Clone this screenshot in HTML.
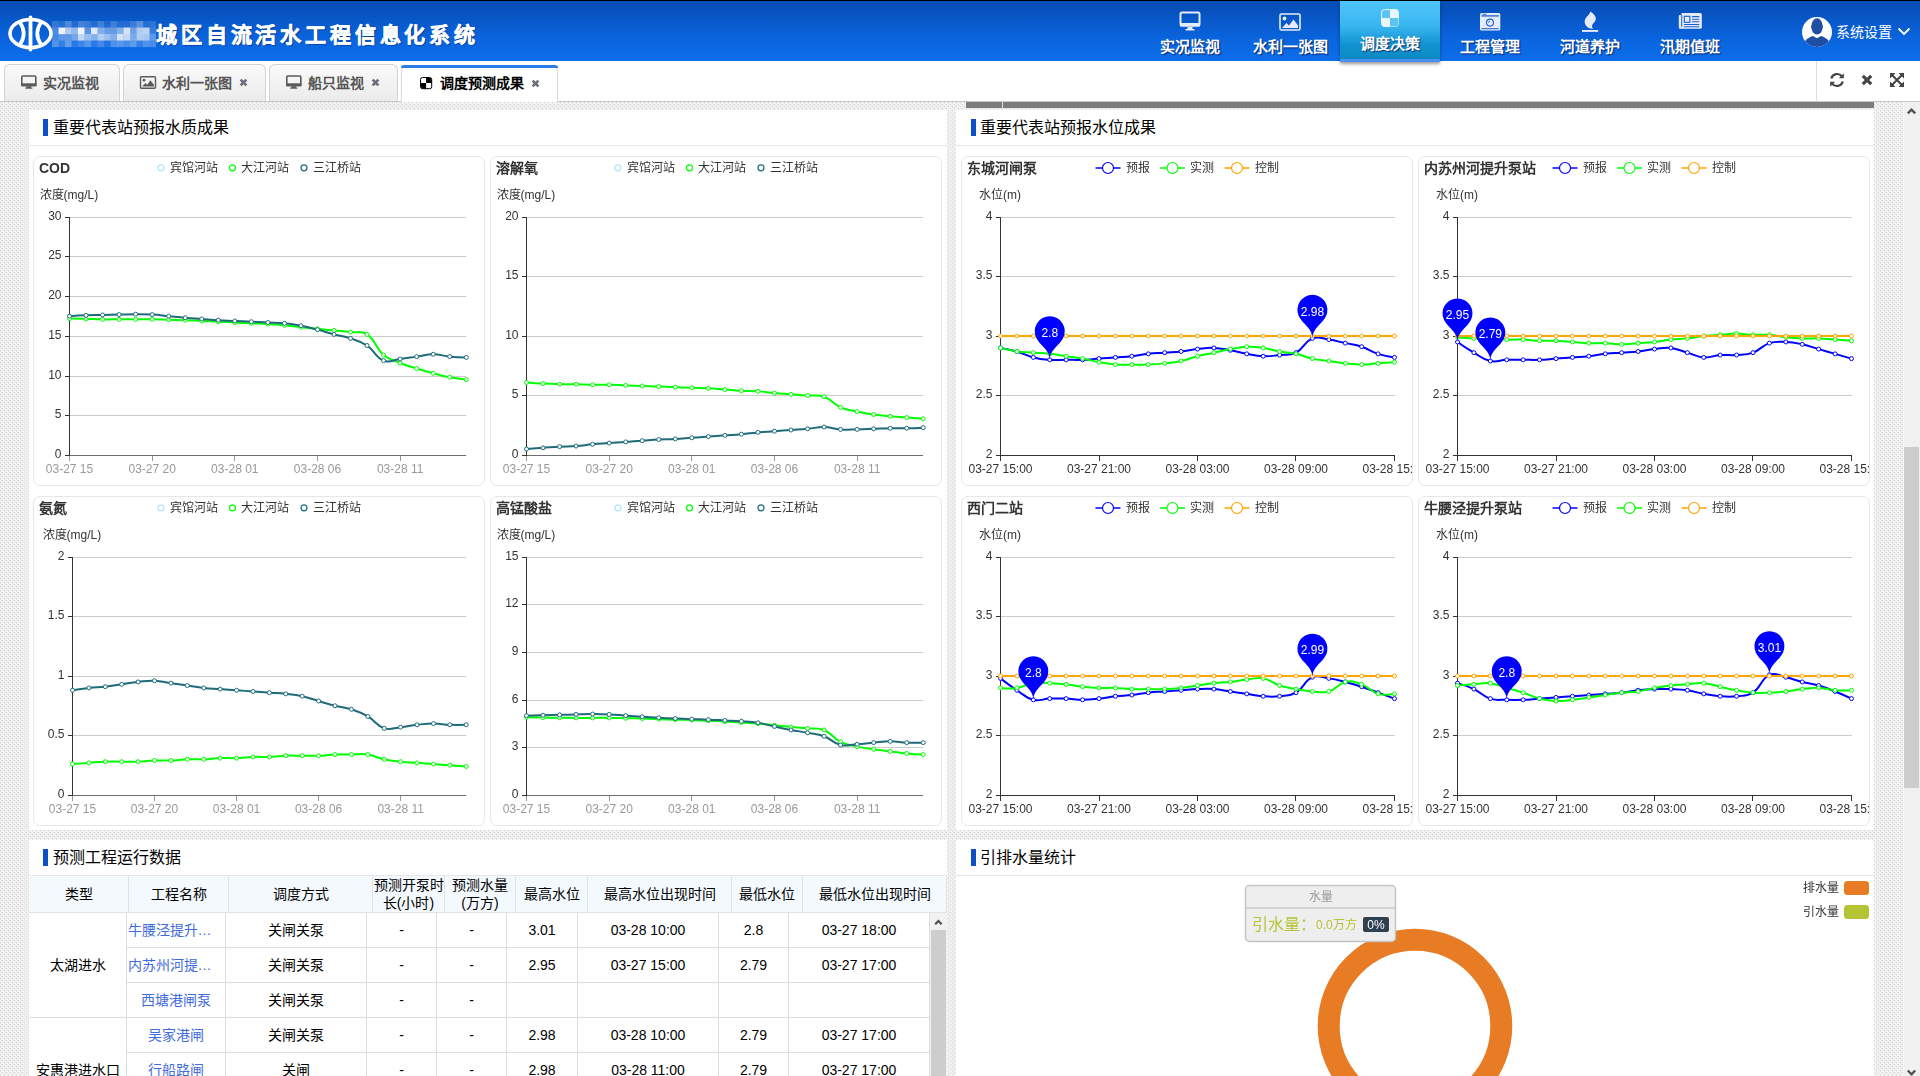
<!DOCTYPE html>
<html lang="zh-CN"><head><meta charset="utf-8"><title>调度预测成果</title>
<style>
*{box-sizing:border-box}
html,body{margin:0;padding:0}
body{width:1920px;height:1076px;overflow:hidden;position:relative;background:#fff;font-family:"Liberation Sans",sans-serif;font-size:14px;color:#000}
#topline{position:absolute;left:0;top:0;width:1920px;height:1px;background:#000}
#header{position:absolute;left:0;top:1px;width:1920px;height:60px;background:linear-gradient(#054cb3,#0a63dc 60%,#0c6eec)}
#title{position:absolute;left:156px;top:16px;color:#fff;font-size:21px;font-weight:bold;letter-spacing:3.85px;-webkit-text-stroke:.5px #fff;white-space:nowrap;line-height:36px;text-shadow:1px 1px 1px rgba(0,30,90,.6)}
.nav{position:absolute;top:0;width:100px;height:60px;color:#fff;text-align:center}
.nav svg{position:absolute;left:0;top:-1px}
.nav span{position:absolute;left:0;width:100px;top:36px;font-size:15px;font-weight:bold;line-height:20px;text-shadow:1px 1px 1px rgba(0,20,80,.8)}
.nav.act{background:linear-gradient(#4fc6fb,#37b4ee 45%,#1193cf 75%,#0d8ac6);height:61px;border-bottom:3px solid #4b8ef4;box-shadow:0 2px 3px rgba(0,0,0,.4);z-index:5}
.nav.act span{top:33px}
#user{position:absolute;left:1836px;top:21px;color:#fff;font-size:14px;line-height:20px;white-space:nowrap}
#tabs{position:absolute;left:0;top:61px;width:1920px;height:41px;background:#fff;border-bottom:1px solid #c8c8c8}
.tab{position:absolute;top:3px;height:37px;border:1px solid #d2d2d2;border-bottom:none;border-radius:6px 6px 0 0;background:linear-gradient(#fafafa,#ebebeb);color:#555;font-weight:bold;font-size:14px;line-height:36px;white-space:nowrap}
.tab.act{background:#fff;border-color:#d8d8d8;color:#000;top:4px;height:37px;line-height:34px}
.tab.act::before{content:"";position:absolute;left:-1px;right:-1px;top:-1px;height:3px;background:#2b7de9;border-radius:6px 6px 0 0}
.tab b{position:absolute;top:0}
.tab svg{position:absolute}
#content{position:absolute;left:0;top:102px;width:1920px;height:974px;overflow:hidden;background-color:#ececec;
 background-image:radial-gradient(circle at .5px .5px,#d3d3d3 .5px,transparent .75px),radial-gradient(circle at .5px .5px,#d3d3d3 .5px,transparent .75px),linear-gradient(45deg,transparent 40%,#f6f6f6 40%,#f6f6f6 60%,transparent 60%),linear-gradient(-45deg,transparent 40%,#f6f6f6 40%,#f6f6f6 60%,transparent 60%);background-size:4px 4px,4px 4px,4px 4px,4px 4px;background-position:0 0,2px 2px,1px 0,1px 0}
.panel{position:absolute;background:#fff}
.ptitle{position:absolute;left:0;top:0;right:0;height:36px;border-bottom:1px solid #e7e7e7}
.ptitle i{position:absolute;left:14px;top:9px;width:5px;height:17px;background:#0e4fc7}
.ptitle span{position:absolute;left:24px;top:6px;font-size:16px;line-height:24px;color:#000;white-space:nowrap}
.card{position:absolute;width:452px;height:330px;border:1px solid #e7e7e7;border-radius:7px;background:#fff}
.ch{position:absolute;will-change:transform}
table{border-collapse:collapse;table-layout:fixed}
</style></head><body>
<div id="topline"></div>
<div id="header"><svg style="position:absolute;left:0;top:0" width="160" height="60" viewBox="0 0 160 60">
<g fill="none" stroke="#fff" stroke-width="3.6" stroke-linecap="round">
<ellipse cx="30.5" cy="32.5" rx="20.5" ry="14"/>
<path d="M30.5 16.5V48.5" stroke-width="3.8"/>
<path d="M20 21.5Q27.5 32.5 20 43.5"/>
<path d="M41 21.5Q33.5 32.5 41 43.5"/>
</g><rect x="52.0" y="20.0" width="6.6" height="6.6" fill="#fff" fill-opacity="0.18"/><rect x="58.5" y="20.0" width="6.6" height="6.6" fill="#fff" fill-opacity="0.13"/><rect x="65.0" y="20.0" width="6.6" height="6.6" fill="#fff" fill-opacity="0.28"/><rect x="71.5" y="20.0" width="6.6" height="6.6" fill="#fff" fill-opacity="0.10"/><rect x="78.0" y="20.0" width="6.6" height="6.6" fill="#fff" fill-opacity="0.24"/><rect x="84.5" y="20.0" width="6.6" height="6.6" fill="#fff" fill-opacity="0.19"/><rect x="91.0" y="20.0" width="6.6" height="6.6" fill="#fff" fill-opacity="0.10"/><rect x="97.5" y="20.0" width="6.6" height="6.6" fill="#fff" fill-opacity="0.23"/><rect x="104.0" y="20.0" width="6.6" height="6.6" fill="#fff" fill-opacity="0.09"/><rect x="110.5" y="20.0" width="6.6" height="6.6" fill="#fff" fill-opacity="0.21"/><rect x="117.0" y="20.0" width="6.6" height="6.6" fill="#fff" fill-opacity="0.10"/><rect x="123.5" y="20.0" width="6.6" height="6.6" fill="#fff" fill-opacity="0.11"/><rect x="130.0" y="20.0" width="6.6" height="6.6" fill="#fff" fill-opacity="0.21"/><rect x="136.5" y="20.0" width="6.6" height="6.6" fill="#fff" fill-opacity="0.33"/><rect x="143.0" y="20.0" width="6.6" height="6.6" fill="#fff" fill-opacity="0.12"/><rect x="149.5" y="20.0" width="6.6" height="6.6" fill="#fff" fill-opacity="0.15"/><rect x="52.0" y="26.5" width="6.6" height="6.6" fill="#fff" fill-opacity="0.27"/><rect x="58.5" y="26.5" width="6.6" height="6.6" fill="#fff" fill-opacity="0.92"/><rect x="65.0" y="26.5" width="6.6" height="6.6" fill="#fff" fill-opacity="0.68"/><rect x="71.5" y="26.5" width="6.6" height="6.6" fill="#fff" fill-opacity="0.56"/><rect x="78.0" y="26.5" width="6.6" height="6.6" fill="#fff" fill-opacity="0.93"/><rect x="84.5" y="26.5" width="6.6" height="6.6" fill="#fff" fill-opacity="0.33"/><rect x="91.0" y="26.5" width="6.6" height="6.6" fill="#fff" fill-opacity="0.86"/><rect x="97.5" y="26.5" width="6.6" height="6.6" fill="#fff" fill-opacity="0.49"/><rect x="104.0" y="26.5" width="6.6" height="6.6" fill="#fff" fill-opacity="0.39"/><rect x="110.5" y="26.5" width="6.6" height="6.6" fill="#fff" fill-opacity="0.38"/><rect x="117.0" y="26.5" width="6.6" height="6.6" fill="#fff" fill-opacity="0.50"/><rect x="123.5" y="26.5" width="6.6" height="6.6" fill="#fff" fill-opacity="0.83"/><rect x="130.0" y="26.5" width="6.6" height="6.6" fill="#fff" fill-opacity="0.42"/><rect x="136.5" y="26.5" width="6.6" height="6.6" fill="#fff" fill-opacity="0.68"/><rect x="143.0" y="26.5" width="6.6" height="6.6" fill="#fff" fill-opacity="0.72"/><rect x="149.5" y="26.5" width="6.6" height="6.6" fill="#fff" fill-opacity="0.19"/><rect x="52.0" y="33.0" width="6.6" height="6.6" fill="#fff" fill-opacity="0.24"/><rect x="58.5" y="33.0" width="6.6" height="6.6" fill="#fff" fill-opacity="0.34"/><rect x="65.0" y="33.0" width="6.6" height="6.6" fill="#fff" fill-opacity="0.34"/><rect x="71.5" y="33.0" width="6.6" height="6.6" fill="#fff" fill-opacity="0.43"/><rect x="78.0" y="33.0" width="6.6" height="6.6" fill="#fff" fill-opacity="0.74"/><rect x="84.5" y="33.0" width="6.6" height="6.6" fill="#fff" fill-opacity="0.58"/><rect x="91.0" y="33.0" width="6.6" height="6.6" fill="#fff" fill-opacity="0.50"/><rect x="97.5" y="33.0" width="6.6" height="6.6" fill="#fff" fill-opacity="0.68"/><rect x="104.0" y="33.0" width="6.6" height="6.6" fill="#fff" fill-opacity="0.59"/><rect x="110.5" y="33.0" width="6.6" height="6.6" fill="#fff" fill-opacity="0.49"/><rect x="117.0" y="33.0" width="6.6" height="6.6" fill="#fff" fill-opacity="0.82"/><rect x="123.5" y="33.0" width="6.6" height="6.6" fill="#fff" fill-opacity="0.75"/><rect x="130.0" y="33.0" width="6.6" height="6.6" fill="#fff" fill-opacity="0.46"/><rect x="136.5" y="33.0" width="6.6" height="6.6" fill="#fff" fill-opacity="0.67"/><rect x="143.0" y="33.0" width="6.6" height="6.6" fill="#fff" fill-opacity="0.64"/><rect x="149.5" y="33.0" width="6.6" height="6.6" fill="#fff" fill-opacity="0.34"/><rect x="52.0" y="39.5" width="6.6" height="6.6" fill="#fff" fill-opacity="0.30"/><rect x="58.5" y="39.5" width="6.6" height="6.6" fill="#fff" fill-opacity="0.17"/><rect x="65.0" y="39.5" width="6.6" height="6.6" fill="#fff" fill-opacity="0.37"/><rect x="71.5" y="39.5" width="6.6" height="6.6" fill="#fff" fill-opacity="0.12"/><rect x="78.0" y="39.5" width="6.6" height="6.6" fill="#fff" fill-opacity="0.21"/><rect x="84.5" y="39.5" width="6.6" height="6.6" fill="#fff" fill-opacity="0.31"/><rect x="91.0" y="39.5" width="6.6" height="6.6" fill="#fff" fill-opacity="0.13"/><rect x="97.5" y="39.5" width="6.6" height="6.6" fill="#fff" fill-opacity="0.23"/><rect x="104.0" y="39.5" width="6.6" height="6.6" fill="#fff" fill-opacity="0.09"/><rect x="110.5" y="39.5" width="6.6" height="6.6" fill="#fff" fill-opacity="0.28"/><rect x="117.0" y="39.5" width="6.6" height="6.6" fill="#fff" fill-opacity="0.31"/><rect x="123.5" y="39.5" width="6.6" height="6.6" fill="#fff" fill-opacity="0.25"/><rect x="130.0" y="39.5" width="6.6" height="6.6" fill="#fff" fill-opacity="0.34"/><rect x="136.5" y="39.5" width="6.6" height="6.6" fill="#fff" fill-opacity="0.17"/><rect x="143.0" y="39.5" width="6.6" height="6.6" fill="#fff" fill-opacity="0.29"/><rect x="149.5" y="39.5" width="6.6" height="6.6" fill="#fff" fill-opacity="0.26"/></svg><div id="title">城区自流活水工程信息化系统</div><div class="nav" style="left:1140px"><svg width="100" height="36" viewBox="0 0 100 36"><rect x="40.5" y="12.5" width="19" height="13" rx="1.5" fill="none" stroke="#e6ebfa" stroke-width="2"/><rect x="40" y="23" width="20" height="3.5" fill="#e6ebfa"/><path d="M47.5 27h5v2h-5zM45.5 29h9v1.5h-9z" fill="#e6ebfa"/></svg><span>实况监视</span></div><div class="nav" style="left:1240px"><svg width="100" height="36" viewBox="0 0 100 36"><rect x="40" y="14" width="20" height="16" rx="1.5" fill="none" stroke="#e6ebfa" stroke-width="1.6"/><circle cx="44.5" cy="18.5" r="1.9" fill="#e6ebfa"/><path d="M42 28l4.5-5 2.5 2.5 4.5-6 4.5 6v2.5z" fill="#e6ebfa"/></svg><span>水利一张图</span></div><div class="nav act" style="left:1340px"><svg width="100" height="36" viewBox="0 0 100 36"><rect x="41.5" y="9.5" width="17" height="17" rx="3" fill="#fff" fill-opacity=".55" stroke="#e8f6ff" stroke-width="1"/><path d="M50 10h5.5a3 3 0 0 1 3 3v5H50zM42 18h8v8.5h-5a3 3 0 0 1-3-3z" fill="#eaf6ff"/><path d="M42 18V13a3 3 0 0 1 3-3h5v8zM50 18h8.5v5.5a3 3 0 0 1-3 3H50z" fill="#5cc4f3"/></svg><span>调度决策</span></div><div class="nav" style="left:1440px"><svg width="100" height="36" viewBox="0 0 100 36"><rect x="40" y="13" width="20.300" height="17.400" rx="1.500" fill="#e6ebfa"/><path d="M41.500 15.900h17.300" stroke="#1a5fd2" stroke-width="1.300"/><path d="M42.500 14.300h4" stroke="#1a5fd2" stroke-width=".9"/><circle cx="50" cy="22.600" r="3.500" fill="none" stroke="#1a5fd2" stroke-width="1.100"/><path d="M48.400 22.800a1.600 1.600 0 0 1 1.600-1.700" stroke="#1a5fd2" stroke-width=".8" fill="none"/><path d="M41.500 28.700h17.300" stroke="#1a5fd2" stroke-width="1"/></svg><span>工程管理</span></div><div class="nav" style="left:1540px"><svg width="100" height="36" viewBox="0 0 100 36"><path d="M50.300 11.600C53 13.400 56.100 16 55.800 19.200C55.500 21.800 52.600 23.100 52.100 25.500C51.800 26.900 52.400 27.900 53.100 28.700C48.800 29 45 26.200 44.700 22C44.400 17.600 49.400 15.600 50.300 11.600Z" fill="#e6ebfa"/><rect x="42" y="30" width="16.200" height="1.900" fill="#e6ebfa"/></svg><span>河道养护</span></div><div class="nav" style="left:1640px"><svg width="100" height="36" viewBox="0 0 100 36"><path d="M41.500 13h18.800a1.500 1.500 0 0 1 1.500 1.500v12.700a1.500 1.500 0 0 1-1.500 1.500h-20a1.500 1.500 0 0 1-1.500-1.500v-11.200a1 1 0 0 1 1-1h1.700z" fill="#e6ebfa"/><path d="M41.700 15v12" stroke="#1a5fd2" stroke-width="1"/><rect x="44.300" y="16.300" width="5.600" height="6" fill="none" stroke="#1a5fd2" stroke-width="1.100"/><path d="M52 16.600h7.300M52 19.200h7.300M52 21.800h7.300M44 24.500h15.300M44 26.800h15.300" stroke="#1a5fd2" stroke-width="1.100"/></svg><span>汛期值班</span></div><svg style="position:absolute;left:1801px;top:15px" width="32" height="32" viewBox="0 0 32 32"><defs><clipPath id="av"><circle cx="16" cy="16" r="15"/></clipPath></defs><circle cx="16" cy="16" r="15" fill="#fff"/><g clip-path="url(#av)" fill="#1f4ea3"><ellipse cx="16" cy="10.400" rx="5.700" ry="8.100"/><path d="M10.300 9.500h11.400v2.600h-11.400z"/><path d="M2 32C2 25 7 21.600 12 20.100L16 22.300L20 20.100C25 21.600 30 25 30 32z"/></g></svg><div id="user">系统设置</div><svg style="position:absolute;left:1897px;top:26px" width="14" height="10" viewBox="0 0 14 10"><path d="M1.500 1.500l5.500 5.500 5.500-5.500" fill="none" stroke="#fff" stroke-width="1.800"/></svg></div>
<div id="tabs"><div class="tab" style="left:4px;width:116px"><svg style="left:15px;top:9px" width="18" height="16" viewBox="0 0 18 16"><rect x="1.800" y="2" width="14" height="9.500" rx="1" fill="none" stroke="#5a5a5a" stroke-width="1.600"/><rect x="1" y="9.300" width="15.600" height="3" fill="#5a5a5a"/><path d="M6.500 12.300h4.600v1.200h-4.600zM5.300 13.500h7v1.200h-7z" fill="#5a5a5a"/></svg><b style="left:38px">实况监视</b></div><div class="tab" style="left:123px;width:143px"><svg style="left:15px;top:10px" width="18" height="16" viewBox="0 0 18 16"><rect x="1.500" y="1.800" width="15" height="11.400" rx="1" fill="none" stroke="#5a5a5a" stroke-width="1.400"/><circle cx="5" cy="5.200" r="1.400" fill="#5a5a5a"/><path d="M3.200 11.600l3.200-3.700 1.800 1.800 3.200-4.400 3.600 4.600v1.700z" fill="#5a5a5a"/></svg><b style="left:38px">水利一张图</b><svg style="left:115px;top:13px" width="9" height="9" viewBox="0 0 9 9"><path d="M1.600 1.600l5.800 5.800M7.400 1.600l-5.800 5.800" stroke="#6b6f7d" stroke-width="2.700"/></svg></div><div class="tab" style="left:269px;width:129px"><svg style="left:15px;top:9px" width="18" height="16" viewBox="0 0 18 16"><rect x="1.800" y="2" width="14" height="9.500" rx="1" fill="none" stroke="#5a5a5a" stroke-width="1.600"/><rect x="1" y="9.300" width="15.600" height="3" fill="#5a5a5a"/><path d="M6.500 12.300h4.600v1.200h-4.600zM5.300 13.500h7v1.200h-7z" fill="#5a5a5a"/></svg><b style="left:38px">船只监视</b><svg style="left:101px;top:13px" width="9" height="9" viewBox="0 0 9 9"><path d="M1.600 1.600l5.800 5.800M7.400 1.600l-5.800 5.800" stroke="#6b6f7d" stroke-width="2.700"/></svg></div><div class="tab act" style="left:401px;width:157px"><svg style="left:18px;top:11px" width="13" height="13" viewBox="0 0 13 13"><rect x=".5" y=".5" width="11.200" height="11.200" rx="2" fill="#fff" stroke="#000" stroke-width="1"/><path d="M6.100 1h3.600a2 2 0 0 1 2 2v3.100H6.100zM1 6.100h5.100v5.600H3a2 2 0 0 1-2-2z" fill="#000"/></svg><b style="left:38px">调度预测成果</b><svg style="left:129px;top:13px" width="9" height="9" viewBox="0 0 9 9"><path d="M1.600 1.600l5.800 5.800M7.400 1.600l-5.800 5.800" stroke="#6b6f7d" stroke-width="2.700"/></svg></div><div style="position:absolute;left:1816px;top:0;width:1px;height:40px;background:#ddd"></div><svg style="position:absolute;left:1828px;top:10px" width="18" height="18" viewBox="0 0 18 18"><g fill="none" stroke="#444" stroke-width="2.200"><path d="M3.300 7.600a6 6 0 0 1 10.600-2.200"/><path d="M14.700 10.400a6 6 0 0 1-10.600 2.200"/></g><path d="M15.800 2.200v5h-5zM2.200 15.800v-5h5z" fill="#444"/></svg><svg style="position:absolute;left:1861px;top:13px" width="12" height="12" viewBox="0 0 12 12"><path d="M1.800 1.800l8.400 8.400M10.200 1.800l-8.400 8.400" stroke="#444" stroke-width="3.200"/></svg><svg style="position:absolute;left:1889px;top:11px" width="16" height="16" viewBox="0 0 16 16"><path d="M3 3l10 10M13 3L3 13" stroke="#444" stroke-width="2"/><path d="M1 1h5.500L1 6.500zM15 1v5.500L9.500 1zM1 15v-5.500L6.500 15zM15 15h-5.500L15 9.500z" fill="#444"/></svg></div>
<div id="content">
<div style="position:absolute;left:966px;top:0;width:908px;height:6px;background:#7d7d7d"></div><div style="position:absolute;left:1002px;top:0;width:1px;height:6px;background:#ddd"></div>
<div class="panel" style="left:29px;top:8px;width:918px;height:720px"><div class="ptitle"><i></i><span>重要代表站预报水质成果</span></div></div>
<div class="panel" style="left:956px;top:8px;width:918px;height:720px"><div class="ptitle"><i style="left:15px"></i><span>重要代表站预报水位成果</span></div></div>
<div class="panel" style="left:29px;top:738px;width:918px;height:300px"><div class="ptitle"><i></i><span>预测工程运行数据</span></div></div>
<div class="panel" style="left:956px;top:738px;width:918px;height:300px"><div class="ptitle"><i style="left:15px"></i><span>引排水量统计</span></div></div>
<div class="card" style="left:33px;top:54px"></div><div class="card" style="left:33px;top:394px"></div><div class="card" style="left:490px;top:54px"></div><div class="card" style="left:490px;top:394px"></div><div class="card" style="left:961px;top:54px"></div><div class="card" style="left:961px;top:394px"></div><div class="card" style="left:1418px;top:54px"></div><div class="card" style="left:1418px;top:394px"></div>
<svg class="ch" style="left:33px;top:54px" width="451" height="329" viewBox="0 0 451 329" font-family='"Liberation Sans", sans-serif' font-size="12"><text x="6" y="16.5" font-size="14" font-weight="bold" fill="#333">COD</text><text x="6.5" y="43" fill="#333">浓度(mg/L)</text><circle cx="128" cy="11.8" r="3" fill="#fff" stroke="#b3e5fc" stroke-width="1.2"/><text x="136.6" y="16" fill="#333">宾馆河站</text><circle cx="199.5" cy="11.8" r="3" fill="#fff" stroke="#00ff00" stroke-width="1.2"/><text x="208.1" y="16" fill="#333">大江河站</text><circle cx="271" cy="11.8" r="3" fill="#fff" stroke="#1f6b7a" stroke-width="1.2"/><text x="279.6" y="16" fill="#333">三江桥站</text><path d="M36.5 259.5H433.25" stroke="#ccc" stroke-width="1" shape-rendering="crispEdges"/><path d="M36.5 220.5H433.25" stroke="#ccc" stroke-width="1" shape-rendering="crispEdges"/><path d="M36.5 180.5H433.25" stroke="#ccc" stroke-width="1" shape-rendering="crispEdges"/><path d="M36.5 140.5H433.25" stroke="#ccc" stroke-width="1" shape-rendering="crispEdges"/><path d="M36.5 100.5H433.25" stroke="#ccc" stroke-width="1" shape-rendering="crispEdges"/><path d="M36.5 61.5H433.25" stroke="#ccc" stroke-width="1" shape-rendering="crispEdges"/><path d="M36.5 299.5H433.25" stroke="#6e6e6e" stroke-width="1" shape-rendering="crispEdges"/><path d="M36.5 299.5V304.5" stroke="#999" stroke-width="1" shape-rendering="crispEdges"/><text x="36.5" y="317" text-anchor="middle" fill="#999">03-27 15</text><path d="M119.5 299.5V304.5" stroke="#999" stroke-width="1" shape-rendering="crispEdges"/><text x="119.156" y="317" text-anchor="middle" fill="#999">03-27 20</text><path d="M201.5 299.5V304.5" stroke="#999" stroke-width="1" shape-rendering="crispEdges"/><text x="201.812" y="317" text-anchor="middle" fill="#999">03-28 01</text><path d="M284.5 299.5V304.5" stroke="#999" stroke-width="1" shape-rendering="crispEdges"/><text x="284.469" y="317" text-anchor="middle" fill="#999">03-28 06</text><path d="M367.5 299.5V304.5" stroke="#999" stroke-width="1" shape-rendering="crispEdges"/><text x="367.125" y="317" text-anchor="middle" fill="#999">03-28 11</text><path d="M36.5 61.5V299.5" stroke="#333" stroke-width="1" shape-rendering="crispEdges"/><path d="M31.5 299.5H36.5" stroke="#333" stroke-width="1" shape-rendering="crispEdges"/><text x="28.5" y="302.1" text-anchor="end" fill="#333">0</text><path d="M31.5 259.5H36.5" stroke="#333" stroke-width="1" shape-rendering="crispEdges"/><text x="28.5" y="262.1" text-anchor="end" fill="#333">5</text><path d="M31.5 220.5H36.5" stroke="#333" stroke-width="1" shape-rendering="crispEdges"/><text x="28.5" y="223.1" text-anchor="end" fill="#333">10</text><path d="M31.5 180.5H36.5" stroke="#333" stroke-width="1" shape-rendering="crispEdges"/><text x="28.5" y="183.1" text-anchor="end" fill="#333">15</text><path d="M31.5 140.5H36.5" stroke="#333" stroke-width="1" shape-rendering="crispEdges"/><text x="28.5" y="143.1" text-anchor="end" fill="#333">20</text><path d="M31.5 100.5H36.5" stroke="#333" stroke-width="1" shape-rendering="crispEdges"/><text x="28.5" y="103.1" text-anchor="end" fill="#333">25</text><path d="M31.5 61.5H36.5" stroke="#333" stroke-width="1" shape-rendering="crispEdges"/><text x="28.5" y="64.1" text-anchor="end" fill="#333">30</text><path d="M36.50 162.55C36.50 162.55 45.59 162.76 53.03 162.94C60.47 163.12 62.12 163.25 69.56 163.34C77.00 163.43 78.65 163.34 86.09 163.34C93.53 163.34 95.19 163.34 102.62 163.34C110.06 163.34 111.72 163.25 119.16 163.34C126.60 163.43 128.25 163.56 135.69 163.74C143.13 163.92 144.78 163.87 152.22 164.13C159.66 164.40 161.31 164.57 168.75 164.93C176.19 165.28 177.84 165.36 185.28 165.72C192.72 166.08 194.37 166.16 201.81 166.51C209.25 166.87 210.90 166.95 218.34 167.31C225.78 167.66 227.44 167.65 234.88 168.10C242.32 168.55 243.98 168.58 251.41 169.29C258.86 170.01 260.49 170.47 267.94 171.27C275.37 172.08 277.03 172.15 284.47 172.86C291.91 173.57 293.56 173.73 301.00 174.45C308.44 175.16 310.11 175.14 317.53 176.03C324.99 176.93 328.30 174.40 334.06 178.41C343.18 184.76 341.81 191.45 350.59 199.04C356.69 204.30 359.50 203.86 367.12 206.97C374.38 209.93 376.17 210.19 383.66 212.53C391.04 214.83 392.70 215.31 400.19 217.29C407.58 219.24 409.21 219.81 416.72 221.25C424.09 222.67 433.25 223.63 433.25 223.63" fill="none" stroke="#00ff00" stroke-width="2" stroke-linejoin="round"/><path d="M36.50 160.17C36.50 160.17 45.59 159.64 53.03 159.37C60.47 159.11 62.12 159.16 69.56 158.98C77.00 158.80 78.65 158.76 86.09 158.58C93.53 158.40 95.19 158.18 102.62 158.18C110.06 158.18 111.73 158.13 119.16 158.58C126.61 159.03 128.25 159.45 135.69 160.17C143.13 160.88 144.77 161.13 152.22 161.75C159.65 162.38 161.31 162.41 168.75 162.94C176.19 163.48 177.84 163.69 185.28 164.13C192.71 164.58 194.37 164.57 201.81 164.93C209.25 165.28 210.90 165.36 218.34 165.72C225.78 166.08 227.44 166.16 234.88 166.51C242.31 166.87 244.00 166.60 251.41 167.31C258.88 168.02 260.56 168.27 267.94 169.69C275.44 171.13 277.07 171.70 284.47 173.65C291.95 175.63 293.52 176.44 301.00 178.41C308.40 180.37 310.31 179.95 317.53 182.38C325.18 184.95 327.43 185.06 334.06 189.52C342.31 195.06 342.05 201.11 350.59 204.59C356.93 207.18 359.71 203.90 367.12 203.01C374.59 202.11 376.22 201.70 383.66 200.63C391.10 199.56 392.75 198.25 400.19 198.25C407.63 198.25 409.25 199.91 416.72 200.63C424.12 201.34 433.25 201.42 433.25 201.42" fill="none" stroke="#1f6b7a" stroke-width="2" stroke-linejoin="round"/><g fill="#fff" stroke="#00ff00" stroke-width="1"><circle cx="36.50" cy="162.55" r="2"/><circle cx="53.03" cy="162.94" r="2"/><circle cx="69.56" cy="163.34" r="2"/><circle cx="86.09" cy="163.34" r="2"/><circle cx="102.62" cy="163.34" r="2"/><circle cx="119.16" cy="163.34" r="2"/><circle cx="135.69" cy="163.74" r="2"/><circle cx="152.22" cy="164.13" r="2"/><circle cx="168.75" cy="164.93" r="2"/><circle cx="185.28" cy="165.72" r="2"/><circle cx="201.81" cy="166.51" r="2"/><circle cx="218.34" cy="167.31" r="2"/><circle cx="234.88" cy="168.10" r="2"/><circle cx="251.41" cy="169.29" r="2"/><circle cx="267.94" cy="171.27" r="2"/><circle cx="284.47" cy="172.86" r="2"/><circle cx="301.00" cy="174.45" r="2"/><circle cx="317.53" cy="176.03" r="2"/><circle cx="334.06" cy="178.41" r="2"/><circle cx="350.59" cy="199.04" r="2"/><circle cx="367.12" cy="206.97" r="2"/><circle cx="383.66" cy="212.53" r="2"/><circle cx="400.19" cy="217.29" r="2"/><circle cx="416.72" cy="221.25" r="2"/><circle cx="433.25" cy="223.63" r="2"/></g><g fill="#fff" stroke="#1f6b7a" stroke-width="1"><circle cx="36.50" cy="160.17" r="2"/><circle cx="53.03" cy="159.37" r="2"/><circle cx="69.56" cy="158.98" r="2"/><circle cx="86.09" cy="158.58" r="2"/><circle cx="102.62" cy="158.18" r="2"/><circle cx="119.16" cy="158.58" r="2"/><circle cx="135.69" cy="160.17" r="2"/><circle cx="152.22" cy="161.75" r="2"/><circle cx="168.75" cy="162.94" r="2"/><circle cx="185.28" cy="164.13" r="2"/><circle cx="201.81" cy="164.93" r="2"/><circle cx="218.34" cy="165.72" r="2"/><circle cx="234.88" cy="166.51" r="2"/><circle cx="251.41" cy="167.31" r="2"/><circle cx="267.94" cy="169.69" r="2"/><circle cx="284.47" cy="173.65" r="2"/><circle cx="301.00" cy="178.41" r="2"/><circle cx="317.53" cy="182.38" r="2"/><circle cx="334.06" cy="189.52" r="2"/><circle cx="350.59" cy="204.59" r="2"/><circle cx="367.12" cy="203.01" r="2"/><circle cx="383.66" cy="200.63" r="2"/><circle cx="400.19" cy="198.25" r="2"/><circle cx="416.72" cy="200.63" r="2"/><circle cx="433.25" cy="201.42" r="2"/></g></svg>
<svg class="ch" style="left:490px;top:54px" width="451" height="329" viewBox="0 0 451 329" font-family='"Liberation Sans", sans-serif' font-size="12"><text x="6" y="16.5" font-size="14" font-weight="bold" fill="#333">溶解氧</text><text x="6.5" y="43" fill="#333">浓度(mg/L)</text><circle cx="128" cy="11.8" r="3" fill="#fff" stroke="#b3e5fc" stroke-width="1.2"/><text x="136.6" y="16" fill="#333">宾馆河站</text><circle cx="199.5" cy="11.8" r="3" fill="#fff" stroke="#00ff00" stroke-width="1.2"/><text x="208.1" y="16" fill="#333">大江河站</text><circle cx="271" cy="11.8" r="3" fill="#fff" stroke="#1f6b7a" stroke-width="1.2"/><text x="279.6" y="16" fill="#333">三江桥站</text><path d="M36.5 239.5H433.25" stroke="#ccc" stroke-width="1" shape-rendering="crispEdges"/><path d="M36.5 180.5H433.25" stroke="#ccc" stroke-width="1" shape-rendering="crispEdges"/><path d="M36.5 120.5H433.25" stroke="#ccc" stroke-width="1" shape-rendering="crispEdges"/><path d="M36.5 61.5H433.25" stroke="#ccc" stroke-width="1" shape-rendering="crispEdges"/><path d="M36.5 299.5H433.25" stroke="#6e6e6e" stroke-width="1" shape-rendering="crispEdges"/><path d="M36.5 299.5V304.5" stroke="#999" stroke-width="1" shape-rendering="crispEdges"/><text x="36.5" y="317" text-anchor="middle" fill="#999">03-27 15</text><path d="M119.5 299.5V304.5" stroke="#999" stroke-width="1" shape-rendering="crispEdges"/><text x="119.156" y="317" text-anchor="middle" fill="#999">03-27 20</text><path d="M201.5 299.5V304.5" stroke="#999" stroke-width="1" shape-rendering="crispEdges"/><text x="201.812" y="317" text-anchor="middle" fill="#999">03-28 01</text><path d="M284.5 299.5V304.5" stroke="#999" stroke-width="1" shape-rendering="crispEdges"/><text x="284.469" y="317" text-anchor="middle" fill="#999">03-28 06</text><path d="M367.5 299.5V304.5" stroke="#999" stroke-width="1" shape-rendering="crispEdges"/><text x="367.125" y="317" text-anchor="middle" fill="#999">03-28 11</text><path d="M36.5 61.5V299.5" stroke="#333" stroke-width="1" shape-rendering="crispEdges"/><path d="M31.5 299.5H36.5" stroke="#333" stroke-width="1" shape-rendering="crispEdges"/><text x="28.5" y="302.1" text-anchor="end" fill="#333">0</text><path d="M31.5 239.5H36.5" stroke="#333" stroke-width="1" shape-rendering="crispEdges"/><text x="28.5" y="242.1" text-anchor="end" fill="#333">5</text><path d="M31.5 180.5H36.5" stroke="#333" stroke-width="1" shape-rendering="crispEdges"/><text x="28.5" y="183.1" text-anchor="end" fill="#333">10</text><path d="M31.5 120.5H36.5" stroke="#333" stroke-width="1" shape-rendering="crispEdges"/><text x="28.5" y="123.1" text-anchor="end" fill="#333">15</text><path d="M31.5 61.5H36.5" stroke="#333" stroke-width="1" shape-rendering="crispEdges"/><text x="28.5" y="64.1" text-anchor="end" fill="#333">20</text><path d="M36.50 226.41C36.50 226.41 45.58 227.20 53.03 227.60C60.46 228.00 62.12 228.06 69.56 228.19C77.00 228.33 78.66 228.06 86.09 228.19C93.54 228.33 95.18 228.66 102.62 228.79C110.06 228.92 111.72 228.66 119.16 228.79C126.60 228.92 128.25 229.12 135.69 229.38C143.13 229.65 144.78 229.71 152.22 229.98C159.66 230.25 161.31 230.31 168.75 230.57C176.19 230.84 177.84 230.90 185.28 231.17C192.72 231.44 194.37 231.50 201.81 231.76C209.25 232.03 210.91 231.96 218.34 232.36C225.79 232.76 227.44 233.01 234.88 233.55C242.31 234.09 243.96 234.34 251.41 234.74C258.84 235.14 260.52 234.80 267.94 235.34C275.40 235.87 277.02 236.45 284.47 237.12C291.90 237.79 293.56 237.77 301.00 238.31C308.44 238.85 310.09 238.96 317.53 239.50C324.97 240.04 327.26 238.24 334.06 240.69C342.14 243.60 342.62 247.81 350.59 251.40C357.50 254.51 359.63 253.95 367.12 255.56C374.51 257.16 376.18 257.46 383.66 258.54C391.06 259.61 392.74 259.65 400.19 260.32C407.61 260.99 409.28 260.98 416.72 261.51C424.16 262.05 433.25 262.70 433.25 262.70" fill="none" stroke="#00ff00" stroke-width="2" stroke-linejoin="round"/><path d="M36.50 293.05C36.50 293.05 45.59 292.40 53.03 291.86C60.47 291.32 62.12 291.07 69.56 290.67C76.99 290.27 78.67 290.61 86.09 290.07C93.55 289.54 95.17 288.96 102.62 288.29C110.05 287.62 111.72 287.64 119.16 287.10C126.60 286.56 128.25 286.45 135.69 285.91C143.13 285.37 144.78 285.26 152.22 284.72C159.66 284.18 161.30 283.93 168.75 283.53C176.18 283.13 177.85 283.34 185.28 282.94C192.73 282.53 194.37 282.28 201.81 281.75C209.25 281.21 210.90 281.09 218.34 280.56C225.78 280.02 227.44 279.90 234.88 279.37C242.31 278.83 243.98 278.84 251.41 278.18C258.86 277.50 260.49 277.06 267.94 276.39C275.36 275.72 277.03 275.74 284.47 275.20C291.91 274.66 293.56 274.55 301.00 274.01C308.44 273.47 310.10 273.49 317.53 272.82C324.98 272.15 326.64 270.90 334.06 271.03C341.52 271.17 343.12 272.88 350.59 273.42C357.99 273.95 359.69 273.55 367.12 273.42C374.57 273.28 376.22 273.09 383.66 272.82C391.10 272.55 392.75 272.36 400.19 272.23C407.62 272.09 409.28 272.36 416.72 272.23C424.16 272.09 433.25 271.63 433.25 271.63" fill="none" stroke="#1f6b7a" stroke-width="2" stroke-linejoin="round"/><g fill="#fff" stroke="#00ff00" stroke-width="1"><circle cx="36.50" cy="226.41" r="2"/><circle cx="53.03" cy="227.60" r="2"/><circle cx="69.56" cy="228.19" r="2"/><circle cx="86.09" cy="228.19" r="2"/><circle cx="102.62" cy="228.79" r="2"/><circle cx="119.16" cy="228.79" r="2"/><circle cx="135.69" cy="229.38" r="2"/><circle cx="152.22" cy="229.98" r="2"/><circle cx="168.75" cy="230.57" r="2"/><circle cx="185.28" cy="231.17" r="2"/><circle cx="201.81" cy="231.76" r="2"/><circle cx="218.34" cy="232.36" r="2"/><circle cx="234.88" cy="233.55" r="2"/><circle cx="251.41" cy="234.74" r="2"/><circle cx="267.94" cy="235.34" r="2"/><circle cx="284.47" cy="237.12" r="2"/><circle cx="301.00" cy="238.31" r="2"/><circle cx="317.53" cy="239.50" r="2"/><circle cx="334.06" cy="240.69" r="2"/><circle cx="350.59" cy="251.40" r="2"/><circle cx="367.12" cy="255.56" r="2"/><circle cx="383.66" cy="258.54" r="2"/><circle cx="400.19" cy="260.32" r="2"/><circle cx="416.72" cy="261.51" r="2"/><circle cx="433.25" cy="262.70" r="2"/></g><g fill="#fff" stroke="#1f6b7a" stroke-width="1"><circle cx="36.50" cy="293.05" r="2"/><circle cx="53.03" cy="291.86" r="2"/><circle cx="69.56" cy="290.67" r="2"/><circle cx="86.09" cy="290.07" r="2"/><circle cx="102.62" cy="288.29" r="2"/><circle cx="119.16" cy="287.10" r="2"/><circle cx="135.69" cy="285.91" r="2"/><circle cx="152.22" cy="284.72" r="2"/><circle cx="168.75" cy="283.53" r="2"/><circle cx="185.28" cy="282.94" r="2"/><circle cx="201.81" cy="281.75" r="2"/><circle cx="218.34" cy="280.56" r="2"/><circle cx="234.88" cy="279.37" r="2"/><circle cx="251.41" cy="278.18" r="2"/><circle cx="267.94" cy="276.39" r="2"/><circle cx="284.47" cy="275.20" r="2"/><circle cx="301.00" cy="274.01" r="2"/><circle cx="317.53" cy="272.82" r="2"/><circle cx="334.06" cy="271.03" r="2"/><circle cx="350.59" cy="273.42" r="2"/><circle cx="367.12" cy="273.42" r="2"/><circle cx="383.66" cy="272.82" r="2"/><circle cx="400.19" cy="272.23" r="2"/><circle cx="416.72" cy="272.23" r="2"/><circle cx="433.25" cy="271.63" r="2"/></g></svg>
<svg class="ch" style="left:33px;top:394px" width="451" height="329" viewBox="0 0 451 329" font-family='"Liberation Sans", sans-serif' font-size="12"><text x="6" y="16.5" font-size="14" font-weight="bold" fill="#333">氨氮</text><text x="9.5" y="43" fill="#333">浓度(mg/L)</text><circle cx="128" cy="11.8" r="3" fill="#fff" stroke="#b3e5fc" stroke-width="1.2"/><text x="136.6" y="16" fill="#333">宾馆河站</text><circle cx="199.5" cy="11.8" r="3" fill="#fff" stroke="#00ff00" stroke-width="1.2"/><text x="208.1" y="16" fill="#333">大江河站</text><circle cx="271" cy="11.8" r="3" fill="#fff" stroke="#1f6b7a" stroke-width="1.2"/><text x="279.6" y="16" fill="#333">三江桥站</text><path d="M39.5 239.5H433.25" stroke="#ccc" stroke-width="1" shape-rendering="crispEdges"/><path d="M39.5 180.5H433.25" stroke="#ccc" stroke-width="1" shape-rendering="crispEdges"/><path d="M39.5 120.5H433.25" stroke="#ccc" stroke-width="1" shape-rendering="crispEdges"/><path d="M39.5 61.5H433.25" stroke="#ccc" stroke-width="1" shape-rendering="crispEdges"/><path d="M39.5 299.5H433.25" stroke="#6e6e6e" stroke-width="1" shape-rendering="crispEdges"/><path d="M39.5 299.5V304.5" stroke="#999" stroke-width="1" shape-rendering="crispEdges"/><text x="39.5" y="317" text-anchor="middle" fill="#999">03-27 15</text><path d="M121.5 299.5V304.5" stroke="#999" stroke-width="1" shape-rendering="crispEdges"/><text x="121.531" y="317" text-anchor="middle" fill="#999">03-27 20</text><path d="M203.5 299.5V304.5" stroke="#999" stroke-width="1" shape-rendering="crispEdges"/><text x="203.562" y="317" text-anchor="middle" fill="#999">03-28 01</text><path d="M285.5 299.5V304.5" stroke="#999" stroke-width="1" shape-rendering="crispEdges"/><text x="285.594" y="317" text-anchor="middle" fill="#999">03-28 06</text><path d="M367.5 299.5V304.5" stroke="#999" stroke-width="1" shape-rendering="crispEdges"/><text x="367.625" y="317" text-anchor="middle" fill="#999">03-28 11</text><path d="M39.5 61.5V299.5" stroke="#333" stroke-width="1" shape-rendering="crispEdges"/><path d="M34.5 299.5H39.5" stroke="#333" stroke-width="1" shape-rendering="crispEdges"/><text x="31.5" y="302.1" text-anchor="end" fill="#333">0</text><path d="M34.5 239.5H39.5" stroke="#333" stroke-width="1" shape-rendering="crispEdges"/><text x="31.5" y="242.1" text-anchor="end" fill="#333">0.5</text><path d="M34.5 180.5H39.5" stroke="#333" stroke-width="1" shape-rendering="crispEdges"/><text x="31.5" y="183.1" text-anchor="end" fill="#333">1</text><path d="M34.5 120.5H39.5" stroke="#333" stroke-width="1" shape-rendering="crispEdges"/><text x="31.5" y="123.1" text-anchor="end" fill="#333">1.5</text><path d="M34.5 61.5H39.5" stroke="#333" stroke-width="1" shape-rendering="crispEdges"/><text x="31.5" y="64.1" text-anchor="end" fill="#333">2</text><path d="M39.50 268.06C39.50 268.06 48.52 267.41 55.91 266.87C63.29 266.33 64.92 265.95 72.31 265.68C79.69 265.41 81.34 265.68 88.72 265.68C96.10 265.68 97.75 265.95 105.12 265.68C112.52 265.41 114.14 264.76 121.53 264.49C128.90 264.22 130.56 264.76 137.94 264.49C145.33 264.22 146.95 263.57 154.34 263.30C161.72 263.03 163.38 263.57 170.75 263.30C178.14 263.03 179.76 262.38 187.16 262.11C194.53 261.84 196.19 262.38 203.56 262.11C210.95 261.84 212.58 261.19 219.97 260.92C227.34 260.65 229.00 261.19 236.38 260.92C243.77 260.65 245.39 260.00 252.78 259.73C260.15 259.46 261.80 259.73 269.19 259.73C276.57 259.73 278.22 260.00 285.59 259.73C292.99 259.46 294.61 258.81 302.00 258.54C309.37 258.27 311.02 258.54 318.41 258.54C325.79 258.54 327.58 257.49 334.81 258.54C342.34 259.63 343.73 261.67 351.22 263.30C358.49 264.88 360.21 264.87 367.62 265.68C374.98 266.48 376.65 266.33 384.03 266.87C391.41 267.41 393.05 267.52 400.44 268.06C407.82 268.60 409.46 268.71 416.84 269.25C424.23 269.79 433.25 270.44 433.25 270.44" fill="none" stroke="#00ff00" stroke-width="2" stroke-linejoin="round"/><path d="M39.50 194.28C39.50 194.28 48.49 192.71 55.91 191.90C63.26 191.10 64.96 191.51 72.31 190.71C79.72 189.90 81.34 189.40 88.72 188.33C96.10 187.26 97.71 186.76 105.12 185.95C112.48 185.15 114.18 184.49 121.53 184.76C128.94 185.03 130.55 186.07 137.94 187.14C145.32 188.21 146.96 188.45 154.34 189.52C161.73 190.59 163.34 191.09 170.75 191.90C178.10 192.70 179.77 192.55 187.16 193.09C194.54 193.63 196.18 193.74 203.56 194.28C210.95 194.82 212.59 194.93 219.97 195.47C227.35 196.01 228.99 196.12 236.38 196.66C243.76 197.20 245.43 197.05 252.78 197.85C260.19 198.66 261.92 198.65 269.19 200.23C276.68 201.86 278.21 202.85 285.59 204.99C292.98 207.13 294.55 207.86 302.00 209.75C309.32 211.61 311.26 210.99 318.41 213.32C326.02 215.81 327.89 216.44 334.81 220.46C342.65 225.01 343.07 229.70 351.22 232.36C357.83 234.52 360.27 231.97 367.62 231.17C375.04 230.36 376.62 229.60 384.03 228.79C391.39 227.99 393.05 227.60 400.44 227.60C407.82 227.60 409.45 228.52 416.84 228.79C424.22 229.06 433.25 228.79 433.25 228.79" fill="none" stroke="#1f6b7a" stroke-width="2" stroke-linejoin="round"/><g fill="#fff" stroke="#00ff00" stroke-width="1"><circle cx="39.50" cy="268.06" r="2"/><circle cx="55.91" cy="266.87" r="2"/><circle cx="72.31" cy="265.68" r="2"/><circle cx="88.72" cy="265.68" r="2"/><circle cx="105.12" cy="265.68" r="2"/><circle cx="121.53" cy="264.49" r="2"/><circle cx="137.94" cy="264.49" r="2"/><circle cx="154.34" cy="263.30" r="2"/><circle cx="170.75" cy="263.30" r="2"/><circle cx="187.16" cy="262.11" r="2"/><circle cx="203.56" cy="262.11" r="2"/><circle cx="219.97" cy="260.92" r="2"/><circle cx="236.38" cy="260.92" r="2"/><circle cx="252.78" cy="259.73" r="2"/><circle cx="269.19" cy="259.73" r="2"/><circle cx="285.59" cy="259.73" r="2"/><circle cx="302.00" cy="258.54" r="2"/><circle cx="318.41" cy="258.54" r="2"/><circle cx="334.81" cy="258.54" r="2"/><circle cx="351.22" cy="263.30" r="2"/><circle cx="367.62" cy="265.68" r="2"/><circle cx="384.03" cy="266.87" r="2"/><circle cx="400.44" cy="268.06" r="2"/><circle cx="416.84" cy="269.25" r="2"/><circle cx="433.25" cy="270.44" r="2"/></g><g fill="#fff" stroke="#1f6b7a" stroke-width="1"><circle cx="39.50" cy="194.28" r="2"/><circle cx="55.91" cy="191.90" r="2"/><circle cx="72.31" cy="190.71" r="2"/><circle cx="88.72" cy="188.33" r="2"/><circle cx="105.12" cy="185.95" r="2"/><circle cx="121.53" cy="184.76" r="2"/><circle cx="137.94" cy="187.14" r="2"/><circle cx="154.34" cy="189.52" r="2"/><circle cx="170.75" cy="191.90" r="2"/><circle cx="187.16" cy="193.09" r="2"/><circle cx="203.56" cy="194.28" r="2"/><circle cx="219.97" cy="195.47" r="2"/><circle cx="236.38" cy="196.66" r="2"/><circle cx="252.78" cy="197.85" r="2"/><circle cx="269.19" cy="200.23" r="2"/><circle cx="285.59" cy="204.99" r="2"/><circle cx="302.00" cy="209.75" r="2"/><circle cx="318.41" cy="213.32" r="2"/><circle cx="334.81" cy="220.46" r="2"/><circle cx="351.22" cy="232.36" r="2"/><circle cx="367.62" cy="231.17" r="2"/><circle cx="384.03" cy="228.79" r="2"/><circle cx="400.44" cy="227.60" r="2"/><circle cx="416.84" cy="228.79" r="2"/><circle cx="433.25" cy="228.79" r="2"/></g></svg>
<svg class="ch" style="left:490px;top:394px" width="451" height="329" viewBox="0 0 451 329" font-family='"Liberation Sans", sans-serif' font-size="12"><text x="6" y="16.5" font-size="14" font-weight="bold" fill="#333">高锰酸盐</text><text x="6.5" y="43" fill="#333">浓度(mg/L)</text><circle cx="128" cy="11.8" r="3" fill="#fff" stroke="#b3e5fc" stroke-width="1.2"/><text x="136.6" y="16" fill="#333">宾馆河站</text><circle cx="199.5" cy="11.8" r="3" fill="#fff" stroke="#00ff00" stroke-width="1.2"/><text x="208.1" y="16" fill="#333">大江河站</text><circle cx="271" cy="11.8" r="3" fill="#fff" stroke="#1f6b7a" stroke-width="1.2"/><text x="279.6" y="16" fill="#333">三江桥站</text><path d="M36.5 251.5H433.25" stroke="#ccc" stroke-width="1" shape-rendering="crispEdges"/><path d="M36.5 204.5H433.25" stroke="#ccc" stroke-width="1" shape-rendering="crispEdges"/><path d="M36.5 156.5H433.25" stroke="#ccc" stroke-width="1" shape-rendering="crispEdges"/><path d="M36.5 108.5H433.25" stroke="#ccc" stroke-width="1" shape-rendering="crispEdges"/><path d="M36.5 61.5H433.25" stroke="#ccc" stroke-width="1" shape-rendering="crispEdges"/><path d="M36.5 299.5H433.25" stroke="#6e6e6e" stroke-width="1" shape-rendering="crispEdges"/><path d="M36.5 299.5V304.5" stroke="#999" stroke-width="1" shape-rendering="crispEdges"/><text x="36.5" y="317" text-anchor="middle" fill="#999">03-27 15</text><path d="M119.5 299.5V304.5" stroke="#999" stroke-width="1" shape-rendering="crispEdges"/><text x="119.156" y="317" text-anchor="middle" fill="#999">03-27 20</text><path d="M201.5 299.5V304.5" stroke="#999" stroke-width="1" shape-rendering="crispEdges"/><text x="201.812" y="317" text-anchor="middle" fill="#999">03-28 01</text><path d="M284.5 299.5V304.5" stroke="#999" stroke-width="1" shape-rendering="crispEdges"/><text x="284.469" y="317" text-anchor="middle" fill="#999">03-28 06</text><path d="M367.5 299.5V304.5" stroke="#999" stroke-width="1" shape-rendering="crispEdges"/><text x="367.125" y="317" text-anchor="middle" fill="#999">03-28 11</text><path d="M36.5 61.5V299.5" stroke="#333" stroke-width="1" shape-rendering="crispEdges"/><path d="M31.5 299.5H36.5" stroke="#333" stroke-width="1" shape-rendering="crispEdges"/><text x="28.5" y="302.1" text-anchor="end" fill="#333">0</text><path d="M31.5 251.5H36.5" stroke="#333" stroke-width="1" shape-rendering="crispEdges"/><text x="28.5" y="254.1" text-anchor="end" fill="#333">3</text><path d="M31.5 204.5H36.5" stroke="#333" stroke-width="1" shape-rendering="crispEdges"/><text x="28.5" y="207.1" text-anchor="end" fill="#333">6</text><path d="M31.5 156.5H36.5" stroke="#333" stroke-width="1" shape-rendering="crispEdges"/><text x="28.5" y="159.1" text-anchor="end" fill="#333">9</text><path d="M31.5 108.5H36.5" stroke="#333" stroke-width="1" shape-rendering="crispEdges"/><text x="28.5" y="111.1" text-anchor="end" fill="#333">12</text><path d="M31.5 61.5H36.5" stroke="#333" stroke-width="1" shape-rendering="crispEdges"/><text x="28.5" y="64.1" text-anchor="end" fill="#333">15</text><path d="M36.50 221.25C36.50 221.25 45.59 221.46 53.03 221.57C60.47 221.68 62.12 221.66 69.56 221.73C77.00 221.80 78.65 221.85 86.09 221.89C93.53 221.92 95.19 221.89 102.62 221.89C110.06 221.89 111.72 221.82 119.16 221.89C126.60 221.96 128.25 222.06 135.69 222.21C143.13 222.35 144.78 222.31 152.22 222.52C159.66 222.74 161.31 222.91 168.75 223.16C176.19 223.41 177.84 223.42 185.28 223.63C192.72 223.85 194.37 223.86 201.81 224.11C209.25 224.36 210.91 224.42 218.34 224.74C225.78 225.07 227.44 225.14 234.88 225.54C242.32 225.93 243.97 226.03 251.41 226.49C258.85 226.95 260.51 226.99 267.94 227.60C275.39 228.21 277.04 228.40 284.47 229.19C291.92 229.97 293.55 230.38 301.00 231.09C308.43 231.80 310.10 231.72 317.53 232.36C324.98 233.00 327.38 231.22 334.06 233.95C342.26 237.29 342.53 241.78 350.59 245.85C357.41 249.28 359.59 248.91 367.12 250.61C374.46 252.26 376.20 252.23 383.66 253.30C391.08 254.37 392.75 254.44 400.19 255.37C407.63 256.29 409.26 256.71 416.72 257.43C424.14 258.14 433.25 258.54 433.25 258.54" fill="none" stroke="#00ff00" stroke-width="2" stroke-linejoin="round"/><path d="M36.50 219.67C36.50 219.67 45.59 219.37 53.03 219.19C60.47 219.01 62.12 219.05 69.56 218.87C77.00 218.69 78.65 218.58 86.09 218.40C93.53 218.22 95.19 218.08 102.62 218.08C110.06 218.08 111.73 218.04 119.16 218.40C126.61 218.75 128.25 219.13 135.69 219.67C143.12 220.20 144.78 220.31 152.22 220.78C159.66 221.24 161.31 221.34 168.75 221.73C176.19 222.12 177.84 222.20 185.28 222.52C192.72 222.84 194.37 222.91 201.81 223.16C209.25 223.41 210.91 223.35 218.34 223.63C225.79 223.92 227.44 224.07 234.88 224.43C242.31 224.78 243.98 224.69 251.41 225.22C258.86 225.76 260.57 225.64 267.94 226.81C275.45 228.00 277.02 228.85 284.47 230.46C291.90 232.06 293.53 232.51 301.00 233.95C308.41 235.37 310.12 235.38 317.53 236.80C325.00 238.24 327.00 237.68 334.06 240.29C341.88 243.18 342.70 247.13 350.59 249.02C357.58 250.70 359.70 248.76 367.12 248.23C374.58 247.69 376.21 247.28 383.66 246.64C391.09 246.00 392.75 245.37 400.19 245.37C407.63 245.37 409.27 246.35 416.72 246.64C424.15 246.93 433.25 246.64 433.25 246.64" fill="none" stroke="#1f6b7a" stroke-width="2" stroke-linejoin="round"/><g fill="#fff" stroke="#00ff00" stroke-width="1"><circle cx="36.50" cy="221.25" r="2"/><circle cx="53.03" cy="221.57" r="2"/><circle cx="69.56" cy="221.73" r="2"/><circle cx="86.09" cy="221.89" r="2"/><circle cx="102.62" cy="221.89" r="2"/><circle cx="119.16" cy="221.89" r="2"/><circle cx="135.69" cy="222.21" r="2"/><circle cx="152.22" cy="222.52" r="2"/><circle cx="168.75" cy="223.16" r="2"/><circle cx="185.28" cy="223.63" r="2"/><circle cx="201.81" cy="224.11" r="2"/><circle cx="218.34" cy="224.74" r="2"/><circle cx="234.88" cy="225.54" r="2"/><circle cx="251.41" cy="226.49" r="2"/><circle cx="267.94" cy="227.60" r="2"/><circle cx="284.47" cy="229.19" r="2"/><circle cx="301.00" cy="231.09" r="2"/><circle cx="317.53" cy="232.36" r="2"/><circle cx="334.06" cy="233.95" r="2"/><circle cx="350.59" cy="245.85" r="2"/><circle cx="367.12" cy="250.61" r="2"/><circle cx="383.66" cy="253.30" r="2"/><circle cx="400.19" cy="255.37" r="2"/><circle cx="416.72" cy="257.43" r="2"/><circle cx="433.25" cy="258.54" r="2"/></g><g fill="#fff" stroke="#1f6b7a" stroke-width="1"><circle cx="36.50" cy="219.67" r="2"/><circle cx="53.03" cy="219.19" r="2"/><circle cx="69.56" cy="218.87" r="2"/><circle cx="86.09" cy="218.40" r="2"/><circle cx="102.62" cy="218.08" r="2"/><circle cx="119.16" cy="218.40" r="2"/><circle cx="135.69" cy="219.67" r="2"/><circle cx="152.22" cy="220.78" r="2"/><circle cx="168.75" cy="221.73" r="2"/><circle cx="185.28" cy="222.52" r="2"/><circle cx="201.81" cy="223.16" r="2"/><circle cx="218.34" cy="223.63" r="2"/><circle cx="234.88" cy="224.43" r="2"/><circle cx="251.41" cy="225.22" r="2"/><circle cx="267.94" cy="226.81" r="2"/><circle cx="284.47" cy="230.46" r="2"/><circle cx="301.00" cy="233.95" r="2"/><circle cx="317.53" cy="236.80" r="2"/><circle cx="334.06" cy="240.29" r="2"/><circle cx="350.59" cy="249.02" r="2"/><circle cx="367.12" cy="248.23" r="2"/><circle cx="383.66" cy="246.64" r="2"/><circle cx="400.19" cy="245.37" r="2"/><circle cx="416.72" cy="246.64" r="2"/><circle cx="433.25" cy="246.64" r="2"/></g></svg>
<svg class="ch" style="left:961px;top:54px" width="451" height="329" viewBox="0 0 451 329" font-family='"Liberation Sans", sans-serif' font-size="12"><text x="6" y="16.5" font-size="14" font-weight="bold" fill="#333">东城河闸泵</text><text x="18" y="43" fill="#333">水位(m)</text><path d="M134.5 12H159.5" stroke="#0000ff" stroke-width="1.5"/><circle cx="147" cy="12" r="5.5" fill="#fff" stroke="#0000ff" stroke-width="1.2"/><text x="164.5" y="16.3" fill="#333">预报</text><path d="M199 12H224" stroke="#00ff00" stroke-width="1.5"/><circle cx="211.5" cy="12" r="5.5" fill="#fff" stroke="#00ff00" stroke-width="1.2"/><text x="229" y="16.3" fill="#333">实测</text><path d="M263.5 12H288.5" stroke="#ffa500" stroke-width="1.5"/><circle cx="276" cy="12" r="5.5" fill="#fff" stroke="#ffa500" stroke-width="1.2"/><text x="293.5" y="16.3" fill="#333">控制</text><path d="M39.5 239.5H433.5" stroke="#ccc" stroke-width="1" shape-rendering="crispEdges"/><path d="M39.5 180.5H433.5" stroke="#ccc" stroke-width="1" shape-rendering="crispEdges"/><path d="M39.5 120.5H433.5" stroke="#ccc" stroke-width="1" shape-rendering="crispEdges"/><path d="M39.5 61.5H433.5" stroke="#ccc" stroke-width="1" shape-rendering="crispEdges"/><path d="M39.5 299.5H434" stroke="#333" stroke-width="1" shape-rendering="crispEdges"/><path d="M39.5 299.5V304.5" stroke="#333" stroke-width="1" shape-rendering="crispEdges"/><text x="39.5" y="317" text-anchor="middle" fill="#333">03-27 15:00</text><path d="M138.5 299.5V304.5" stroke="#333" stroke-width="1" shape-rendering="crispEdges"/><text x="138" y="317" text-anchor="middle" fill="#333">03-27 21:00</text><path d="M236.5 299.5V304.5" stroke="#333" stroke-width="1" shape-rendering="crispEdges"/><text x="236.5" y="317" text-anchor="middle" fill="#333">03-28 03:00</text><path d="M334.5 299.5V304.5" stroke="#333" stroke-width="1" shape-rendering="crispEdges"/><text x="335" y="317" text-anchor="middle" fill="#333">03-28 09:00</text><path d="M433.5 299.5V304.5" stroke="#333" stroke-width="1" shape-rendering="crispEdges"/><text x="433.5" y="317" text-anchor="middle" fill="#333">03-28 15:00</text><path d="M39.5 61.5V299.5" stroke="#333" stroke-width="1" shape-rendering="crispEdges"/><path d="M34.5 299.5H39.5" stroke="#333" stroke-width="1" shape-rendering="crispEdges"/><text x="31.5" y="302.1" text-anchor="end" fill="#333">2</text><path d="M34.5 239.5H39.5" stroke="#333" stroke-width="1" shape-rendering="crispEdges"/><text x="31.5" y="242.1" text-anchor="end" fill="#333">2.5</text><path d="M34.5 180.5H39.5" stroke="#333" stroke-width="1" shape-rendering="crispEdges"/><text x="31.5" y="183.1" text-anchor="end" fill="#333">3</text><path d="M34.5 120.5H39.5" stroke="#333" stroke-width="1" shape-rendering="crispEdges"/><text x="31.5" y="123.1" text-anchor="end" fill="#333">3.5</text><path d="M34.5 61.5H39.5" stroke="#333" stroke-width="1" shape-rendering="crispEdges"/><text x="31.5" y="64.1" text-anchor="end" fill="#333">4</text><path d="M39.50 191.90C39.50 191.90 48.67 193.37 55.92 195.47C63.45 197.65 64.76 199.50 72.33 201.42C79.53 203.25 81.32 203.26 88.75 203.80C96.10 204.33 97.78 203.80 105.17 203.80C112.55 203.80 114.21 204.07 121.58 203.80C128.98 203.53 130.61 203.15 138.00 202.61C145.39 202.07 147.03 201.96 154.42 201.42C161.80 200.88 163.47 201.03 170.83 200.23C178.25 199.42 179.83 198.66 187.25 197.85C194.61 197.05 196.28 197.20 203.67 196.66C211.05 196.12 212.72 196.27 220.08 195.47C227.50 194.66 229.08 193.90 236.50 193.09C243.86 192.29 245.56 191.63 252.92 191.90C260.33 192.17 261.99 192.95 269.33 194.28C276.77 195.63 278.32 196.50 285.75 197.85C293.09 199.18 294.75 199.96 302.17 200.23C309.53 200.50 311.22 199.84 318.58 199.04C326.00 198.23 328.61 199.90 335.00 196.66C343.38 192.41 343.00 185.73 351.42 182.38C357.78 179.84 360.52 182.51 367.83 183.57C375.30 184.65 376.86 185.53 384.25 187.14C391.64 188.75 393.51 188.38 400.67 190.71C408.29 193.20 409.46 195.36 417.08 197.85C424.24 200.18 433.50 201.42 433.50 201.42" fill="none" stroke="#0000ff" stroke-width="2" stroke-linejoin="round"/><path d="M39.50 191.90C39.50 191.90 48.45 194.39 55.92 195.47C63.23 196.53 64.95 196.12 72.33 196.66C79.72 197.20 81.39 197.05 88.75 197.85C96.17 198.66 97.78 199.16 105.17 200.23C112.55 201.30 114.24 201.28 121.58 202.61C129.02 203.96 130.57 204.83 138.00 206.18C145.34 207.51 146.99 208.02 154.42 208.56C161.77 209.09 163.45 208.56 170.83 208.56C178.22 208.56 179.87 208.83 187.25 208.56C194.65 208.29 196.31 208.17 203.67 207.37C211.08 206.56 212.81 206.57 220.08 204.99C227.58 203.36 229.05 202.12 236.50 200.23C243.82 198.37 245.53 198.27 252.92 196.66C260.30 195.05 261.90 194.44 269.33 193.09C276.67 191.76 278.33 190.98 285.75 190.71C293.11 190.44 294.85 190.84 302.17 191.90C309.63 192.98 311.15 194.12 318.58 195.47C325.92 196.80 327.72 196.27 335.00 197.85C342.50 199.48 343.92 200.98 351.42 202.61C358.69 204.19 360.45 203.92 367.83 204.99C375.22 206.06 376.83 206.56 384.25 207.37C391.61 208.17 393.28 208.56 400.67 208.56C408.05 208.56 409.70 207.91 417.08 207.37C424.47 206.83 433.50 206.18 433.50 206.18" fill="none" stroke="#00ff00" stroke-width="2" stroke-linejoin="round"/><path d="M39.50 180.00C39.50 180.00 48.53 180.00 55.92 180.00C63.30 180.00 64.95 180.00 72.33 180.00C79.72 180.00 81.36 180.00 88.75 180.00C96.14 180.00 97.78 180.00 105.17 180.00C112.55 180.00 114.20 180.00 121.58 180.00C128.97 180.00 130.61 180.00 138.00 180.00C145.39 180.00 147.03 180.00 154.42 180.00C161.80 180.00 163.45 180.00 170.83 180.00C178.22 180.00 179.86 180.00 187.25 180.00C194.64 180.00 196.28 180.00 203.67 180.00C211.05 180.00 212.70 180.00 220.08 180.00C227.47 180.00 229.11 180.00 236.50 180.00C243.89 180.00 245.53 180.00 252.92 180.00C260.30 180.00 261.95 180.00 269.33 180.00C276.72 180.00 278.36 180.00 285.75 180.00C293.14 180.00 294.78 180.00 302.17 180.00C309.55 180.00 311.20 180.00 318.58 180.00C325.97 180.00 327.61 180.00 335.00 180.00C342.39 180.00 344.03 180.00 351.42 180.00C358.80 180.00 360.45 180.00 367.83 180.00C375.22 180.00 376.86 180.00 384.25 180.00C391.64 180.00 393.28 180.00 400.67 180.00C408.05 180.00 409.70 180.00 417.08 180.00C424.47 180.00 433.50 180.00 433.50 180.00" fill="none" stroke="#ffa500" stroke-width="2" stroke-linejoin="round"/><g fill="#fff" stroke="#0000ff" stroke-width="1"><circle cx="39.50" cy="191.90" r="2"/><circle cx="55.92" cy="195.47" r="2"/><circle cx="72.33" cy="201.42" r="2"/><circle cx="88.75" cy="203.80" r="2"/><circle cx="105.17" cy="203.80" r="2"/><circle cx="121.58" cy="203.80" r="2"/><circle cx="138.00" cy="202.61" r="2"/><circle cx="154.42" cy="201.42" r="2"/><circle cx="170.83" cy="200.23" r="2"/><circle cx="187.25" cy="197.85" r="2"/><circle cx="203.67" cy="196.66" r="2"/><circle cx="220.08" cy="195.47" r="2"/><circle cx="236.50" cy="193.09" r="2"/><circle cx="252.92" cy="191.90" r="2"/><circle cx="269.33" cy="194.28" r="2"/><circle cx="285.75" cy="197.85" r="2"/><circle cx="302.17" cy="200.23" r="2"/><circle cx="318.58" cy="199.04" r="2"/><circle cx="335.00" cy="196.66" r="2"/><circle cx="351.42" cy="182.38" r="2"/><circle cx="367.83" cy="183.57" r="2"/><circle cx="384.25" cy="187.14" r="2"/><circle cx="400.67" cy="190.71" r="2"/><circle cx="417.08" cy="197.85" r="2"/><circle cx="433.50" cy="201.42" r="2"/></g><g fill="#fff" stroke="#00ff00" stroke-width="1"><circle cx="39.50" cy="191.90" r="2"/><circle cx="55.92" cy="195.47" r="2"/><circle cx="72.33" cy="196.66" r="2"/><circle cx="88.75" cy="197.85" r="2"/><circle cx="105.17" cy="200.23" r="2"/><circle cx="121.58" cy="202.61" r="2"/><circle cx="138.00" cy="206.18" r="2"/><circle cx="154.42" cy="208.56" r="2"/><circle cx="170.83" cy="208.56" r="2"/><circle cx="187.25" cy="208.56" r="2"/><circle cx="203.67" cy="207.37" r="2"/><circle cx="220.08" cy="204.99" r="2"/><circle cx="236.50" cy="200.23" r="2"/><circle cx="252.92" cy="196.66" r="2"/><circle cx="269.33" cy="193.09" r="2"/><circle cx="285.75" cy="190.71" r="2"/><circle cx="302.17" cy="191.90" r="2"/><circle cx="318.58" cy="195.47" r="2"/><circle cx="335.00" cy="197.85" r="2"/><circle cx="351.42" cy="202.61" r="2"/><circle cx="367.83" cy="204.99" r="2"/><circle cx="384.25" cy="207.37" r="2"/><circle cx="400.67" cy="208.56" r="2"/><circle cx="417.08" cy="207.37" r="2"/><circle cx="433.50" cy="206.18" r="2"/></g><g fill="#fff" stroke="#ffa500" stroke-width="1"><circle cx="39.50" cy="180.00" r="2"/><circle cx="55.92" cy="180.00" r="2"/><circle cx="72.33" cy="180.00" r="2"/><circle cx="88.75" cy="180.00" r="2"/><circle cx="105.17" cy="180.00" r="2"/><circle cx="121.58" cy="180.00" r="2"/><circle cx="138.00" cy="180.00" r="2"/><circle cx="154.42" cy="180.00" r="2"/><circle cx="170.83" cy="180.00" r="2"/><circle cx="187.25" cy="180.00" r="2"/><circle cx="203.67" cy="180.00" r="2"/><circle cx="220.08" cy="180.00" r="2"/><circle cx="236.50" cy="180.00" r="2"/><circle cx="252.92" cy="180.00" r="2"/><circle cx="269.33" cy="180.00" r="2"/><circle cx="285.75" cy="180.00" r="2"/><circle cx="302.17" cy="180.00" r="2"/><circle cx="318.58" cy="180.00" r="2"/><circle cx="335.00" cy="180.00" r="2"/><circle cx="351.42" cy="180.00" r="2"/><circle cx="367.83" cy="180.00" r="2"/><circle cx="384.25" cy="180.00" r="2"/><circle cx="400.67" cy="180.00" r="2"/><circle cx="417.08" cy="180.00" r="2"/><circle cx="433.50" cy="180.00" r="2"/></g><path d="M75.20 181.66A15.00 15.00 0 1 1 102.30 181.66C98.45 189.79 88.75 193.30 88.75 203.80C88.75 193.30 79.05 189.79 75.20 181.66Z" fill="#0000ff"/><text x="88.75" y="181.03" text-anchor="middle" fill="#fff">2.8</text><path d="M337.86 160.24A15.00 15.00 0 1 1 364.97 160.24C361.11 168.37 351.42 171.88 351.42 182.38C351.42 171.88 341.72 168.37 337.86 160.24Z" fill="#0000ff"/><text x="351.42" y="159.61" text-anchor="middle" fill="#fff">2.98</text></svg>
<svg class="ch" style="left:1418px;top:54px" width="451" height="329" viewBox="0 0 451 329" font-family='"Liberation Sans", sans-serif' font-size="12"><text x="6" y="16.5" font-size="14" font-weight="bold" fill="#333">内苏州河提升泵站</text><text x="18" y="43" fill="#333">水位(m)</text><path d="M134.5 12H159.5" stroke="#0000ff" stroke-width="1.5"/><circle cx="147" cy="12" r="5.5" fill="#fff" stroke="#0000ff" stroke-width="1.2"/><text x="164.5" y="16.3" fill="#333">预报</text><path d="M199 12H224" stroke="#00ff00" stroke-width="1.5"/><circle cx="211.5" cy="12" r="5.5" fill="#fff" stroke="#00ff00" stroke-width="1.2"/><text x="229" y="16.3" fill="#333">实测</text><path d="M263.5 12H288.5" stroke="#ffa500" stroke-width="1.5"/><circle cx="276" cy="12" r="5.5" fill="#fff" stroke="#ffa500" stroke-width="1.2"/><text x="293.5" y="16.3" fill="#333">控制</text><path d="M39.5 239.5H433.5" stroke="#ccc" stroke-width="1" shape-rendering="crispEdges"/><path d="M39.5 180.5H433.5" stroke="#ccc" stroke-width="1" shape-rendering="crispEdges"/><path d="M39.5 120.5H433.5" stroke="#ccc" stroke-width="1" shape-rendering="crispEdges"/><path d="M39.5 61.5H433.5" stroke="#ccc" stroke-width="1" shape-rendering="crispEdges"/><path d="M39.5 299.5H434" stroke="#333" stroke-width="1" shape-rendering="crispEdges"/><path d="M39.5 299.5V304.5" stroke="#333" stroke-width="1" shape-rendering="crispEdges"/><text x="39.5" y="317" text-anchor="middle" fill="#333">03-27 15:00</text><path d="M138.5 299.5V304.5" stroke="#333" stroke-width="1" shape-rendering="crispEdges"/><text x="138" y="317" text-anchor="middle" fill="#333">03-27 21:00</text><path d="M236.5 299.5V304.5" stroke="#333" stroke-width="1" shape-rendering="crispEdges"/><text x="236.5" y="317" text-anchor="middle" fill="#333">03-28 03:00</text><path d="M334.5 299.5V304.5" stroke="#333" stroke-width="1" shape-rendering="crispEdges"/><text x="335" y="317" text-anchor="middle" fill="#333">03-28 09:00</text><path d="M433.5 299.5V304.5" stroke="#333" stroke-width="1" shape-rendering="crispEdges"/><text x="433.5" y="317" text-anchor="middle" fill="#333">03-28 15:00</text><path d="M39.5 61.5V299.5" stroke="#333" stroke-width="1" shape-rendering="crispEdges"/><path d="M34.5 299.5H39.5" stroke="#333" stroke-width="1" shape-rendering="crispEdges"/><text x="31.5" y="302.1" text-anchor="end" fill="#333">2</text><path d="M34.5 239.5H39.5" stroke="#333" stroke-width="1" shape-rendering="crispEdges"/><text x="31.5" y="242.1" text-anchor="end" fill="#333">2.5</text><path d="M34.5 180.5H39.5" stroke="#333" stroke-width="1" shape-rendering="crispEdges"/><text x="31.5" y="183.1" text-anchor="end" fill="#333">3</text><path d="M34.5 120.5H39.5" stroke="#333" stroke-width="1" shape-rendering="crispEdges"/><text x="31.5" y="123.1" text-anchor="end" fill="#333">3.5</text><path d="M34.5 61.5H39.5" stroke="#333" stroke-width="1" shape-rendering="crispEdges"/><text x="31.5" y="64.1" text-anchor="end" fill="#333">4</text><path d="M39.50 185.95C39.50 185.95 48.30 192.24 55.92 196.66C63.07 200.81 64.53 203.29 72.33 204.99C79.31 206.51 81.35 204.07 88.75 203.80C96.13 203.53 97.78 203.80 105.17 203.80C112.55 203.80 114.21 204.07 121.58 203.80C128.98 203.53 130.61 203.15 138.00 202.61C145.39 202.07 147.03 201.96 154.42 201.42C161.80 200.88 163.47 201.03 170.83 200.23C178.25 199.42 179.83 198.66 187.25 197.85C194.61 197.05 196.28 197.20 203.67 196.66C211.05 196.12 212.72 196.27 220.08 195.47C227.50 194.66 229.08 193.90 236.50 193.09C243.86 192.29 245.67 191.11 252.92 191.90C260.44 192.72 261.95 194.52 269.33 196.66C276.72 198.80 278.25 200.88 285.75 201.42C293.03 201.95 294.74 199.58 302.17 199.04C309.52 198.51 311.23 199.57 318.58 199.04C326.01 198.50 328.11 199.16 335.00 196.66C342.88 193.80 343.50 189.72 351.42 187.14C358.28 184.90 360.47 185.68 367.83 185.95C375.25 186.22 376.97 186.75 384.25 188.33C391.75 189.96 393.28 190.95 400.67 193.09C408.05 195.23 409.70 195.71 417.08 197.85C424.47 199.99 433.50 202.61 433.50 202.61" fill="none" stroke="#0000ff" stroke-width="2" stroke-linejoin="round"/><path d="M39.50 181.19C39.50 181.19 48.52 182.11 55.92 182.38C63.29 182.65 64.96 182.11 72.33 182.38C79.73 182.65 81.35 183.30 88.75 183.57C96.13 183.84 97.79 183.30 105.17 183.57C112.56 183.84 114.19 184.49 121.58 184.76C128.96 185.03 130.62 184.49 138.00 184.76C145.40 185.03 147.03 185.41 154.42 185.95C161.80 186.49 163.44 186.87 170.83 187.14C178.21 187.41 179.87 186.87 187.25 187.14C194.65 187.41 196.28 188.33 203.67 188.33C211.05 188.33 212.70 187.68 220.08 187.14C227.47 186.60 229.14 186.75 236.50 185.95C243.92 185.14 245.50 184.38 252.92 183.57C260.28 182.77 261.97 183.18 269.33 182.38C276.75 181.57 278.33 180.81 285.75 180.00C293.11 179.20 294.78 179.35 302.17 178.81C309.55 178.27 311.20 177.62 318.58 177.62C325.97 177.62 327.60 178.54 335.00 178.81C342.38 179.08 344.07 178.28 351.42 178.81C358.84 179.35 360.42 180.38 367.83 181.19C375.19 181.99 376.85 182.11 384.25 182.38C391.63 182.65 393.29 182.11 400.67 182.38C408.06 182.65 409.70 183.03 417.08 183.57C424.47 184.11 433.50 184.76 433.50 184.76" fill="none" stroke="#00ff00" stroke-width="2" stroke-linejoin="round"/><path d="M39.50 180.00C39.50 180.00 48.53 180.00 55.92 180.00C63.30 180.00 64.95 180.00 72.33 180.00C79.72 180.00 81.36 180.00 88.75 180.00C96.14 180.00 97.78 180.00 105.17 180.00C112.55 180.00 114.20 180.00 121.58 180.00C128.97 180.00 130.61 180.00 138.00 180.00C145.39 180.00 147.03 180.00 154.42 180.00C161.80 180.00 163.45 180.00 170.83 180.00C178.22 180.00 179.86 180.00 187.25 180.00C194.64 180.00 196.28 180.00 203.67 180.00C211.05 180.00 212.70 180.00 220.08 180.00C227.47 180.00 229.11 180.00 236.50 180.00C243.89 180.00 245.53 180.00 252.92 180.00C260.30 180.00 261.95 180.00 269.33 180.00C276.72 180.00 278.36 180.00 285.75 180.00C293.14 180.00 294.78 180.00 302.17 180.00C309.55 180.00 311.20 180.00 318.58 180.00C325.97 180.00 327.61 180.00 335.00 180.00C342.39 180.00 344.03 180.00 351.42 180.00C358.80 180.00 360.45 180.00 367.83 180.00C375.22 180.00 376.86 180.00 384.25 180.00C391.64 180.00 393.28 180.00 400.67 180.00C408.05 180.00 409.70 180.00 417.08 180.00C424.47 180.00 433.50 180.00 433.50 180.00" fill="none" stroke="#ffa500" stroke-width="2" stroke-linejoin="round"/><g fill="#fff" stroke="#0000ff" stroke-width="1"><circle cx="39.50" cy="185.95" r="2"/><circle cx="55.92" cy="196.66" r="2"/><circle cx="72.33" cy="204.99" r="2"/><circle cx="88.75" cy="203.80" r="2"/><circle cx="105.17" cy="203.80" r="2"/><circle cx="121.58" cy="203.80" r="2"/><circle cx="138.00" cy="202.61" r="2"/><circle cx="154.42" cy="201.42" r="2"/><circle cx="170.83" cy="200.23" r="2"/><circle cx="187.25" cy="197.85" r="2"/><circle cx="203.67" cy="196.66" r="2"/><circle cx="220.08" cy="195.47" r="2"/><circle cx="236.50" cy="193.09" r="2"/><circle cx="252.92" cy="191.90" r="2"/><circle cx="269.33" cy="196.66" r="2"/><circle cx="285.75" cy="201.42" r="2"/><circle cx="302.17" cy="199.04" r="2"/><circle cx="318.58" cy="199.04" r="2"/><circle cx="335.00" cy="196.66" r="2"/><circle cx="351.42" cy="187.14" r="2"/><circle cx="367.83" cy="185.95" r="2"/><circle cx="384.25" cy="188.33" r="2"/><circle cx="400.67" cy="193.09" r="2"/><circle cx="417.08" cy="197.85" r="2"/><circle cx="433.50" cy="202.61" r="2"/></g><g fill="#fff" stroke="#00ff00" stroke-width="1"><circle cx="39.50" cy="181.19" r="2"/><circle cx="55.92" cy="182.38" r="2"/><circle cx="72.33" cy="182.38" r="2"/><circle cx="88.75" cy="183.57" r="2"/><circle cx="105.17" cy="183.57" r="2"/><circle cx="121.58" cy="184.76" r="2"/><circle cx="138.00" cy="184.76" r="2"/><circle cx="154.42" cy="185.95" r="2"/><circle cx="170.83" cy="187.14" r="2"/><circle cx="187.25" cy="187.14" r="2"/><circle cx="203.67" cy="188.33" r="2"/><circle cx="220.08" cy="187.14" r="2"/><circle cx="236.50" cy="185.95" r="2"/><circle cx="252.92" cy="183.57" r="2"/><circle cx="269.33" cy="182.38" r="2"/><circle cx="285.75" cy="180.00" r="2"/><circle cx="302.17" cy="178.81" r="2"/><circle cx="318.58" cy="177.62" r="2"/><circle cx="335.00" cy="178.81" r="2"/><circle cx="351.42" cy="178.81" r="2"/><circle cx="367.83" cy="181.19" r="2"/><circle cx="384.25" cy="182.38" r="2"/><circle cx="400.67" cy="182.38" r="2"/><circle cx="417.08" cy="183.57" r="2"/><circle cx="433.50" cy="184.76" r="2"/></g><g fill="#fff" stroke="#ffa500" stroke-width="1"><circle cx="39.50" cy="180.00" r="2"/><circle cx="55.92" cy="180.00" r="2"/><circle cx="72.33" cy="180.00" r="2"/><circle cx="88.75" cy="180.00" r="2"/><circle cx="105.17" cy="180.00" r="2"/><circle cx="121.58" cy="180.00" r="2"/><circle cx="138.00" cy="180.00" r="2"/><circle cx="154.42" cy="180.00" r="2"/><circle cx="170.83" cy="180.00" r="2"/><circle cx="187.25" cy="180.00" r="2"/><circle cx="203.67" cy="180.00" r="2"/><circle cx="220.08" cy="180.00" r="2"/><circle cx="236.50" cy="180.00" r="2"/><circle cx="252.92" cy="180.00" r="2"/><circle cx="269.33" cy="180.00" r="2"/><circle cx="285.75" cy="180.00" r="2"/><circle cx="302.17" cy="180.00" r="2"/><circle cx="318.58" cy="180.00" r="2"/><circle cx="335.00" cy="180.00" r="2"/><circle cx="351.42" cy="180.00" r="2"/><circle cx="367.83" cy="180.00" r="2"/><circle cx="384.25" cy="180.00" r="2"/><circle cx="400.67" cy="180.00" r="2"/><circle cx="417.08" cy="180.00" r="2"/><circle cx="433.50" cy="180.00" r="2"/></g><path d="M25.95 163.81A15.00 15.00 0 1 1 53.05 163.81C49.20 171.94 39.50 175.45 39.50 185.95C39.50 175.45 29.80 171.94 25.95 163.81Z" fill="#0000ff"/><text x="39.50" y="163.18" text-anchor="middle" fill="#fff">2.95</text><path d="M58.78 182.85A15.00 15.00 0 1 1 85.89 182.85C82.03 190.98 72.33 194.49 72.33 204.99C72.33 194.49 62.64 190.98 58.78 182.85Z" fill="#0000ff"/><text x="72.33" y="182.22" text-anchor="middle" fill="#fff">2.79</text></svg>
<svg class="ch" style="left:961px;top:394px" width="451" height="329" viewBox="0 0 451 329" font-family='"Liberation Sans", sans-serif' font-size="12"><text x="6" y="16.5" font-size="14" font-weight="bold" fill="#333">西门二站</text><text x="18" y="43" fill="#333">水位(m)</text><path d="M134.5 12H159.5" stroke="#0000ff" stroke-width="1.5"/><circle cx="147" cy="12" r="5.5" fill="#fff" stroke="#0000ff" stroke-width="1.2"/><text x="164.5" y="16.3" fill="#333">预报</text><path d="M199 12H224" stroke="#00ff00" stroke-width="1.5"/><circle cx="211.5" cy="12" r="5.5" fill="#fff" stroke="#00ff00" stroke-width="1.2"/><text x="229" y="16.3" fill="#333">实测</text><path d="M263.5 12H288.5" stroke="#ffa500" stroke-width="1.5"/><circle cx="276" cy="12" r="5.5" fill="#fff" stroke="#ffa500" stroke-width="1.2"/><text x="293.5" y="16.3" fill="#333">控制</text><path d="M39.5 239.5H433.5" stroke="#ccc" stroke-width="1" shape-rendering="crispEdges"/><path d="M39.5 180.5H433.5" stroke="#ccc" stroke-width="1" shape-rendering="crispEdges"/><path d="M39.5 120.5H433.5" stroke="#ccc" stroke-width="1" shape-rendering="crispEdges"/><path d="M39.5 61.5H433.5" stroke="#ccc" stroke-width="1" shape-rendering="crispEdges"/><path d="M39.5 299.5H434" stroke="#333" stroke-width="1" shape-rendering="crispEdges"/><path d="M39.5 299.5V304.5" stroke="#333" stroke-width="1" shape-rendering="crispEdges"/><text x="39.5" y="317" text-anchor="middle" fill="#333">03-27 15:00</text><path d="M138.5 299.5V304.5" stroke="#333" stroke-width="1" shape-rendering="crispEdges"/><text x="138" y="317" text-anchor="middle" fill="#333">03-27 21:00</text><path d="M236.5 299.5V304.5" stroke="#333" stroke-width="1" shape-rendering="crispEdges"/><text x="236.5" y="317" text-anchor="middle" fill="#333">03-28 03:00</text><path d="M334.5 299.5V304.5" stroke="#333" stroke-width="1" shape-rendering="crispEdges"/><text x="335" y="317" text-anchor="middle" fill="#333">03-28 09:00</text><path d="M433.5 299.5V304.5" stroke="#333" stroke-width="1" shape-rendering="crispEdges"/><text x="433.5" y="317" text-anchor="middle" fill="#333">03-28 15:00</text><path d="M39.5 61.5V299.5" stroke="#333" stroke-width="1" shape-rendering="crispEdges"/><path d="M34.5 299.5H39.5" stroke="#333" stroke-width="1" shape-rendering="crispEdges"/><text x="31.5" y="302.1" text-anchor="end" fill="#333">2</text><path d="M34.5 239.5H39.5" stroke="#333" stroke-width="1" shape-rendering="crispEdges"/><text x="31.5" y="242.1" text-anchor="end" fill="#333">2.5</text><path d="M34.5 180.5H39.5" stroke="#333" stroke-width="1" shape-rendering="crispEdges"/><text x="31.5" y="183.1" text-anchor="end" fill="#333">3</text><path d="M34.5 120.5H39.5" stroke="#333" stroke-width="1" shape-rendering="crispEdges"/><text x="31.5" y="123.1" text-anchor="end" fill="#333">3.5</text><path d="M34.5 61.5H39.5" stroke="#333" stroke-width="1" shape-rendering="crispEdges"/><text x="31.5" y="64.1" text-anchor="end" fill="#333">4</text><path d="M39.50 182.38C39.50 182.38 48.28 189.30 55.92 194.28C63.06 198.94 64.42 201.79 72.33 203.80C79.20 205.54 81.35 202.88 88.75 202.61C96.13 202.34 97.79 202.34 105.17 202.61C112.56 202.88 114.20 203.80 121.58 203.80C128.97 203.80 130.64 203.41 138.00 202.61C145.42 201.80 147.00 201.04 154.42 200.23C161.78 199.43 163.47 199.84 170.83 199.04C178.25 198.23 179.83 197.47 187.25 196.66C194.61 195.86 196.28 196.01 203.67 195.47C211.05 194.93 212.70 194.82 220.08 194.28C227.47 193.74 229.10 193.36 236.50 193.09C243.88 192.82 245.57 192.56 252.92 193.09C260.34 193.63 261.95 194.40 269.33 195.47C276.72 196.54 278.36 196.78 285.75 197.85C293.14 198.92 294.74 199.69 302.17 200.23C309.52 200.76 311.28 201.02 318.58 200.23C326.06 199.42 328.69 200.32 335.00 196.66C343.47 191.75 342.87 184.91 351.42 181.19C357.65 178.48 360.52 181.32 367.83 182.38C375.30 183.46 376.93 184.09 384.25 185.95C391.70 187.84 393.36 188.33 400.67 190.71C408.13 193.15 409.70 193.98 417.08 196.66C424.47 199.34 433.50 202.61 433.50 202.61" fill="none" stroke="#0000ff" stroke-width="2" stroke-linejoin="round"/><path d="M39.50 191.90C39.50 191.90 48.68 192.95 55.92 191.90C63.45 190.81 64.80 188.23 72.33 187.14C79.57 186.09 81.37 186.87 88.75 187.14C96.15 187.41 97.81 187.53 105.17 188.33C112.58 189.14 114.17 189.90 121.58 190.71C128.94 191.51 130.60 191.63 138.00 191.90C145.38 192.17 147.04 191.63 154.42 191.90C161.81 192.17 163.44 192.82 170.83 193.09C178.21 193.36 179.86 193.09 187.25 193.09C194.64 193.09 196.29 193.36 203.67 193.09C211.06 192.82 212.72 192.70 220.08 191.90C227.50 191.09 229.11 190.59 236.50 189.52C243.89 188.45 245.50 187.95 252.92 187.14C260.28 186.34 261.97 186.75 269.33 185.95C276.75 185.14 278.33 184.38 285.75 183.57C293.11 182.77 295.09 181.10 302.17 182.38C309.86 183.77 310.96 187.03 318.58 189.52C325.74 191.85 327.57 191.74 335.00 193.09C342.34 194.42 343.99 194.93 351.42 195.47C358.77 196.00 360.98 197.46 367.83 195.47C375.76 193.17 376.37 187.66 384.25 185.95C391.14 184.45 393.78 185.83 400.67 188.33C408.55 191.19 409.16 195.55 417.08 197.85C423.94 199.84 433.50 197.85 433.50 197.85" fill="none" stroke="#00ff00" stroke-width="2" stroke-linejoin="round"/><path d="M39.50 180.00C39.50 180.00 48.53 180.00 55.92 180.00C63.30 180.00 64.95 180.00 72.33 180.00C79.72 180.00 81.36 180.00 88.75 180.00C96.14 180.00 97.78 180.00 105.17 180.00C112.55 180.00 114.20 180.00 121.58 180.00C128.97 180.00 130.61 180.00 138.00 180.00C145.39 180.00 147.03 180.00 154.42 180.00C161.80 180.00 163.45 180.00 170.83 180.00C178.22 180.00 179.86 180.00 187.25 180.00C194.64 180.00 196.28 180.00 203.67 180.00C211.05 180.00 212.70 180.00 220.08 180.00C227.47 180.00 229.11 180.00 236.50 180.00C243.89 180.00 245.53 180.00 252.92 180.00C260.30 180.00 261.95 180.00 269.33 180.00C276.72 180.00 278.36 180.00 285.75 180.00C293.14 180.00 294.78 180.00 302.17 180.00C309.55 180.00 311.20 180.00 318.58 180.00C325.97 180.00 327.61 180.00 335.00 180.00C342.39 180.00 344.03 180.00 351.42 180.00C358.80 180.00 360.45 180.00 367.83 180.00C375.22 180.00 376.86 180.00 384.25 180.00C391.64 180.00 393.28 180.00 400.67 180.00C408.05 180.00 409.70 180.00 417.08 180.00C424.47 180.00 433.50 180.00 433.50 180.00" fill="none" stroke="#ffa500" stroke-width="2" stroke-linejoin="round"/><g fill="#fff" stroke="#0000ff" stroke-width="1"><circle cx="39.50" cy="182.38" r="2"/><circle cx="55.92" cy="194.28" r="2"/><circle cx="72.33" cy="203.80" r="2"/><circle cx="88.75" cy="202.61" r="2"/><circle cx="105.17" cy="202.61" r="2"/><circle cx="121.58" cy="203.80" r="2"/><circle cx="138.00" cy="202.61" r="2"/><circle cx="154.42" cy="200.23" r="2"/><circle cx="170.83" cy="199.04" r="2"/><circle cx="187.25" cy="196.66" r="2"/><circle cx="203.67" cy="195.47" r="2"/><circle cx="220.08" cy="194.28" r="2"/><circle cx="236.50" cy="193.09" r="2"/><circle cx="252.92" cy="193.09" r="2"/><circle cx="269.33" cy="195.47" r="2"/><circle cx="285.75" cy="197.85" r="2"/><circle cx="302.17" cy="200.23" r="2"/><circle cx="318.58" cy="200.23" r="2"/><circle cx="335.00" cy="196.66" r="2"/><circle cx="351.42" cy="181.19" r="2"/><circle cx="367.83" cy="182.38" r="2"/><circle cx="384.25" cy="185.95" r="2"/><circle cx="400.67" cy="190.71" r="2"/><circle cx="417.08" cy="196.66" r="2"/><circle cx="433.50" cy="202.61" r="2"/></g><g fill="#fff" stroke="#00ff00" stroke-width="1"><circle cx="39.50" cy="191.90" r="2"/><circle cx="55.92" cy="191.90" r="2"/><circle cx="72.33" cy="187.14" r="2"/><circle cx="88.75" cy="187.14" r="2"/><circle cx="105.17" cy="188.33" r="2"/><circle cx="121.58" cy="190.71" r="2"/><circle cx="138.00" cy="191.90" r="2"/><circle cx="154.42" cy="191.90" r="2"/><circle cx="170.83" cy="193.09" r="2"/><circle cx="187.25" cy="193.09" r="2"/><circle cx="203.67" cy="193.09" r="2"/><circle cx="220.08" cy="191.90" r="2"/><circle cx="236.50" cy="189.52" r="2"/><circle cx="252.92" cy="187.14" r="2"/><circle cx="269.33" cy="185.95" r="2"/><circle cx="285.75" cy="183.57" r="2"/><circle cx="302.17" cy="182.38" r="2"/><circle cx="318.58" cy="189.52" r="2"/><circle cx="335.00" cy="193.09" r="2"/><circle cx="351.42" cy="195.47" r="2"/><circle cx="367.83" cy="195.47" r="2"/><circle cx="384.25" cy="185.95" r="2"/><circle cx="400.67" cy="188.33" r="2"/><circle cx="417.08" cy="197.85" r="2"/><circle cx="433.50" cy="197.85" r="2"/></g><g fill="#fff" stroke="#ffa500" stroke-width="1"><circle cx="39.50" cy="180.00" r="2"/><circle cx="55.92" cy="180.00" r="2"/><circle cx="72.33" cy="180.00" r="2"/><circle cx="88.75" cy="180.00" r="2"/><circle cx="105.17" cy="180.00" r="2"/><circle cx="121.58" cy="180.00" r="2"/><circle cx="138.00" cy="180.00" r="2"/><circle cx="154.42" cy="180.00" r="2"/><circle cx="170.83" cy="180.00" r="2"/><circle cx="187.25" cy="180.00" r="2"/><circle cx="203.67" cy="180.00" r="2"/><circle cx="220.08" cy="180.00" r="2"/><circle cx="236.50" cy="180.00" r="2"/><circle cx="252.92" cy="180.00" r="2"/><circle cx="269.33" cy="180.00" r="2"/><circle cx="285.75" cy="180.00" r="2"/><circle cx="302.17" cy="180.00" r="2"/><circle cx="318.58" cy="180.00" r="2"/><circle cx="335.00" cy="180.00" r="2"/><circle cx="351.42" cy="180.00" r="2"/><circle cx="367.83" cy="180.00" r="2"/><circle cx="384.25" cy="180.00" r="2"/><circle cx="400.67" cy="180.00" r="2"/><circle cx="417.08" cy="180.00" r="2"/><circle cx="433.50" cy="180.00" r="2"/></g><path d="M58.78 181.66A15.00 15.00 0 1 1 85.89 181.66C82.03 189.79 72.33 193.30 72.33 203.80C72.33 193.30 62.64 189.79 58.78 181.66Z" fill="#0000ff"/><text x="72.33" y="181.03" text-anchor="middle" fill="#fff">2.8</text><path d="M337.86 159.05A15.00 15.00 0 1 1 364.97 159.05C361.11 167.18 351.42 170.69 351.42 181.19C351.42 170.69 341.72 167.18 337.86 159.05Z" fill="#0000ff"/><text x="351.42" y="158.42" text-anchor="middle" fill="#fff">2.99</text></svg>
<svg class="ch" style="left:1418px;top:394px" width="451" height="329" viewBox="0 0 451 329" font-family='"Liberation Sans", sans-serif' font-size="12"><text x="6" y="16.5" font-size="14" font-weight="bold" fill="#333">牛腰泾提升泵站</text><text x="18" y="43" fill="#333">水位(m)</text><path d="M134.5 12H159.5" stroke="#0000ff" stroke-width="1.5"/><circle cx="147" cy="12" r="5.5" fill="#fff" stroke="#0000ff" stroke-width="1.2"/><text x="164.5" y="16.3" fill="#333">预报</text><path d="M199 12H224" stroke="#00ff00" stroke-width="1.5"/><circle cx="211.5" cy="12" r="5.5" fill="#fff" stroke="#00ff00" stroke-width="1.2"/><text x="229" y="16.3" fill="#333">实测</text><path d="M263.5 12H288.5" stroke="#ffa500" stroke-width="1.5"/><circle cx="276" cy="12" r="5.5" fill="#fff" stroke="#ffa500" stroke-width="1.2"/><text x="293.5" y="16.3" fill="#333">控制</text><path d="M39.5 239.5H433.5" stroke="#ccc" stroke-width="1" shape-rendering="crispEdges"/><path d="M39.5 180.5H433.5" stroke="#ccc" stroke-width="1" shape-rendering="crispEdges"/><path d="M39.5 120.5H433.5" stroke="#ccc" stroke-width="1" shape-rendering="crispEdges"/><path d="M39.5 61.5H433.5" stroke="#ccc" stroke-width="1" shape-rendering="crispEdges"/><path d="M39.5 299.5H434" stroke="#333" stroke-width="1" shape-rendering="crispEdges"/><path d="M39.5 299.5V304.5" stroke="#333" stroke-width="1" shape-rendering="crispEdges"/><text x="39.5" y="317" text-anchor="middle" fill="#333">03-27 15:00</text><path d="M138.5 299.5V304.5" stroke="#333" stroke-width="1" shape-rendering="crispEdges"/><text x="138" y="317" text-anchor="middle" fill="#333">03-27 21:00</text><path d="M236.5 299.5V304.5" stroke="#333" stroke-width="1" shape-rendering="crispEdges"/><text x="236.5" y="317" text-anchor="middle" fill="#333">03-28 03:00</text><path d="M334.5 299.5V304.5" stroke="#333" stroke-width="1" shape-rendering="crispEdges"/><text x="335" y="317" text-anchor="middle" fill="#333">03-28 09:00</text><path d="M433.5 299.5V304.5" stroke="#333" stroke-width="1" shape-rendering="crispEdges"/><text x="433.5" y="317" text-anchor="middle" fill="#333">03-28 15:00</text><path d="M39.5 61.5V299.5" stroke="#333" stroke-width="1" shape-rendering="crispEdges"/><path d="M34.5 299.5H39.5" stroke="#333" stroke-width="1" shape-rendering="crispEdges"/><text x="31.5" y="302.1" text-anchor="end" fill="#333">2</text><path d="M34.5 239.5H39.5" stroke="#333" stroke-width="1" shape-rendering="crispEdges"/><text x="31.5" y="242.1" text-anchor="end" fill="#333">2.5</text><path d="M34.5 180.5H39.5" stroke="#333" stroke-width="1" shape-rendering="crispEdges"/><text x="31.5" y="183.1" text-anchor="end" fill="#333">3</text><path d="M34.5 120.5H39.5" stroke="#333" stroke-width="1" shape-rendering="crispEdges"/><text x="31.5" y="123.1" text-anchor="end" fill="#333">3.5</text><path d="M34.5 61.5H39.5" stroke="#333" stroke-width="1" shape-rendering="crispEdges"/><text x="31.5" y="64.1" text-anchor="end" fill="#333">4</text><path d="M39.50 187.14C39.50 187.14 48.84 189.75 55.92 193.09C63.61 196.72 64.42 200.03 72.33 202.61C79.20 204.85 81.35 203.53 88.75 203.80C96.13 204.07 97.79 204.07 105.17 203.80C112.56 203.53 114.20 203.15 121.58 202.61C128.97 202.07 130.61 201.96 138.00 201.42C145.39 200.88 147.03 200.77 154.42 200.23C161.80 199.69 163.45 199.58 170.83 199.04C178.22 198.50 179.86 198.39 187.25 197.85C194.64 197.31 196.31 197.46 203.67 196.66C211.08 195.85 212.67 195.09 220.08 194.28C227.44 193.48 229.10 193.36 236.50 193.09C243.88 192.82 245.54 192.82 252.92 193.09C260.31 193.36 262.02 193.22 269.33 194.28C276.80 195.36 278.32 196.50 285.75 197.85C293.09 199.18 294.74 199.69 302.17 200.23C309.52 200.76 311.28 201.02 318.58 200.23C326.06 199.42 328.95 200.60 335.00 196.66C343.73 190.97 342.64 182.94 351.42 178.81C357.42 175.98 360.56 179.61 367.83 181.19C375.33 182.82 376.80 184.06 384.25 185.95C391.57 187.81 393.42 187.42 400.67 189.52C408.20 191.70 409.79 192.56 417.08 195.47C424.56 198.45 433.50 202.61 433.50 202.61" fill="none" stroke="#0000ff" stroke-width="2" stroke-linejoin="round"/><path d="M39.50 189.52C39.50 189.52 48.53 188.87 55.92 188.33C63.30 187.79 65.09 186.35 72.33 187.14C79.86 187.96 81.36 189.76 88.75 191.90C96.14 194.04 97.86 194.28 105.17 196.66C112.63 199.10 114.01 200.69 121.58 202.61C128.78 204.44 130.58 204.72 138.00 204.99C145.36 205.26 147.06 204.60 154.42 203.80C161.83 202.99 163.45 202.49 170.83 201.42C178.22 200.35 179.86 200.11 187.25 199.04C194.64 197.97 196.25 197.47 203.67 196.66C211.03 195.86 212.77 196.53 220.08 195.47C227.55 194.39 229.07 193.25 236.50 191.90C243.84 190.57 245.50 190.33 252.92 189.52C260.28 188.72 261.95 188.87 269.33 188.33C276.72 187.79 278.44 186.61 285.75 187.14C293.21 187.68 294.78 189.10 302.17 190.71C309.55 192.32 311.15 192.93 318.58 194.28C325.92 195.61 327.57 196.12 335.00 196.66C342.35 197.19 344.04 196.93 351.42 196.66C358.81 196.39 360.47 196.27 367.83 195.47C375.25 194.66 376.83 193.90 384.25 193.09C391.61 192.29 393.31 191.63 400.67 191.90C408.08 192.17 409.66 193.74 417.08 194.28C424.43 194.81 433.50 194.28 433.50 194.28" fill="none" stroke="#00ff00" stroke-width="2" stroke-linejoin="round"/><path d="M39.50 180.00C39.50 180.00 48.53 180.00 55.92 180.00C63.30 180.00 64.95 180.00 72.33 180.00C79.72 180.00 81.36 180.00 88.75 180.00C96.14 180.00 97.78 180.00 105.17 180.00C112.55 180.00 114.20 180.00 121.58 180.00C128.97 180.00 130.61 180.00 138.00 180.00C145.39 180.00 147.03 180.00 154.42 180.00C161.80 180.00 163.45 180.00 170.83 180.00C178.22 180.00 179.86 180.00 187.25 180.00C194.64 180.00 196.28 180.00 203.67 180.00C211.05 180.00 212.70 180.00 220.08 180.00C227.47 180.00 229.11 180.00 236.50 180.00C243.89 180.00 245.53 180.00 252.92 180.00C260.30 180.00 261.95 180.00 269.33 180.00C276.72 180.00 278.36 180.00 285.75 180.00C293.14 180.00 294.78 180.00 302.17 180.00C309.55 180.00 311.20 180.00 318.58 180.00C325.97 180.00 327.61 180.00 335.00 180.00C342.39 180.00 344.03 180.00 351.42 180.00C358.80 180.00 360.45 180.00 367.83 180.00C375.22 180.00 376.86 180.00 384.25 180.00C391.64 180.00 393.28 180.00 400.67 180.00C408.05 180.00 409.70 180.00 417.08 180.00C424.47 180.00 433.50 180.00 433.50 180.00" fill="none" stroke="#ffa500" stroke-width="2" stroke-linejoin="round"/><g fill="#fff" stroke="#0000ff" stroke-width="1"><circle cx="39.50" cy="187.14" r="2"/><circle cx="55.92" cy="193.09" r="2"/><circle cx="72.33" cy="202.61" r="2"/><circle cx="88.75" cy="203.80" r="2"/><circle cx="105.17" cy="203.80" r="2"/><circle cx="121.58" cy="202.61" r="2"/><circle cx="138.00" cy="201.42" r="2"/><circle cx="154.42" cy="200.23" r="2"/><circle cx="170.83" cy="199.04" r="2"/><circle cx="187.25" cy="197.85" r="2"/><circle cx="203.67" cy="196.66" r="2"/><circle cx="220.08" cy="194.28" r="2"/><circle cx="236.50" cy="193.09" r="2"/><circle cx="252.92" cy="193.09" r="2"/><circle cx="269.33" cy="194.28" r="2"/><circle cx="285.75" cy="197.85" r="2"/><circle cx="302.17" cy="200.23" r="2"/><circle cx="318.58" cy="200.23" r="2"/><circle cx="335.00" cy="196.66" r="2"/><circle cx="351.42" cy="178.81" r="2"/><circle cx="367.83" cy="181.19" r="2"/><circle cx="384.25" cy="185.95" r="2"/><circle cx="400.67" cy="189.52" r="2"/><circle cx="417.08" cy="195.47" r="2"/><circle cx="433.50" cy="202.61" r="2"/></g><g fill="#fff" stroke="#00ff00" stroke-width="1"><circle cx="39.50" cy="189.52" r="2"/><circle cx="55.92" cy="188.33" r="2"/><circle cx="72.33" cy="187.14" r="2"/><circle cx="88.75" cy="191.90" r="2"/><circle cx="105.17" cy="196.66" r="2"/><circle cx="121.58" cy="202.61" r="2"/><circle cx="138.00" cy="204.99" r="2"/><circle cx="154.42" cy="203.80" r="2"/><circle cx="170.83" cy="201.42" r="2"/><circle cx="187.25" cy="199.04" r="2"/><circle cx="203.67" cy="196.66" r="2"/><circle cx="220.08" cy="195.47" r="2"/><circle cx="236.50" cy="191.90" r="2"/><circle cx="252.92" cy="189.52" r="2"/><circle cx="269.33" cy="188.33" r="2"/><circle cx="285.75" cy="187.14" r="2"/><circle cx="302.17" cy="190.71" r="2"/><circle cx="318.58" cy="194.28" r="2"/><circle cx="335.00" cy="196.66" r="2"/><circle cx="351.42" cy="196.66" r="2"/><circle cx="367.83" cy="195.47" r="2"/><circle cx="384.25" cy="193.09" r="2"/><circle cx="400.67" cy="191.90" r="2"/><circle cx="417.08" cy="194.28" r="2"/><circle cx="433.50" cy="194.28" r="2"/></g><g fill="#fff" stroke="#ffa500" stroke-width="1"><circle cx="39.50" cy="180.00" r="2"/><circle cx="55.92" cy="180.00" r="2"/><circle cx="72.33" cy="180.00" r="2"/><circle cx="88.75" cy="180.00" r="2"/><circle cx="105.17" cy="180.00" r="2"/><circle cx="121.58" cy="180.00" r="2"/><circle cx="138.00" cy="180.00" r="2"/><circle cx="154.42" cy="180.00" r="2"/><circle cx="170.83" cy="180.00" r="2"/><circle cx="187.25" cy="180.00" r="2"/><circle cx="203.67" cy="180.00" r="2"/><circle cx="220.08" cy="180.00" r="2"/><circle cx="236.50" cy="180.00" r="2"/><circle cx="252.92" cy="180.00" r="2"/><circle cx="269.33" cy="180.00" r="2"/><circle cx="285.75" cy="180.00" r="2"/><circle cx="302.17" cy="180.00" r="2"/><circle cx="318.58" cy="180.00" r="2"/><circle cx="335.00" cy="180.00" r="2"/><circle cx="351.42" cy="180.00" r="2"/><circle cx="367.83" cy="180.00" r="2"/><circle cx="384.25" cy="180.00" r="2"/><circle cx="400.67" cy="180.00" r="2"/><circle cx="417.08" cy="180.00" r="2"/><circle cx="433.50" cy="180.00" r="2"/></g><path d="M75.20 181.66A15.00 15.00 0 1 1 102.30 181.66C98.45 189.79 88.75 193.30 88.75 203.80C88.75 193.30 79.05 189.79 75.20 181.66Z" fill="#0000ff"/><text x="88.75" y="181.03" text-anchor="middle" fill="#fff">2.8</text><path d="M337.86 156.67A15.00 15.00 0 1 1 364.97 156.67C361.11 164.80 351.42 168.31 351.42 178.81C351.42 168.31 341.72 164.80 337.86 156.67Z" fill="#0000ff"/><text x="351.42" y="156.04" text-anchor="middle" fill="#fff">3.01</text></svg>
<div style="position:absolute;left:29px;top:774px;width:918px;height:37px;background:#f4f9fe;border-bottom:1px solid #e0e3e6"></div><div style="position:absolute;left:29px;top:774px;width:99px;height:37px;border-left:none;text-align:center;font-size:14px;line-height:37px;padding-top:0;color:#000;white-space:nowrap">类型</div><div style="position:absolute;left:128px;top:774px;width:100px;height:37px;border-left:1px solid #dfe3e6;text-align:center;font-size:14px;line-height:37px;padding-top:0;color:#000;white-space:nowrap">工程名称</div><div style="position:absolute;left:228px;top:774px;width:144px;height:37px;border-left:1px solid #dfe3e6;text-align:center;font-size:14px;line-height:37px;padding-top:0;color:#000;white-space:nowrap">调度方式</div><div style="position:absolute;left:372px;top:774px;width:72px;height:37px;border-left:1px solid #dfe3e6;text-align:center;font-size:14px;line-height:18px;padding-top:0;color:#000;white-space:nowrap">预测开泵时<br>长(小时)</div><div style="position:absolute;left:444px;top:774px;width:71px;height:37px;border-left:1px solid #dfe3e6;text-align:center;font-size:14px;line-height:18px;padding-top:0;color:#000;white-space:nowrap">预测水量<br>(万方)</div><div style="position:absolute;left:515px;top:774px;width:72px;height:37px;border-left:1px solid #dfe3e6;text-align:center;font-size:14px;line-height:37px;padding-top:0;color:#000;white-space:nowrap">最高水位</div><div style="position:absolute;left:587px;top:774px;width:144px;height:37px;border-left:1px solid #dfe3e6;text-align:center;font-size:14px;line-height:37px;padding-top:0;color:#000;white-space:nowrap">最高水位出现时间</div><div style="position:absolute;left:731px;top:774px;width:71px;height:37px;border-left:1px solid #dfe3e6;text-align:center;font-size:14px;line-height:37px;padding-top:0;color:#000;white-space:nowrap">最低水位</div><div style="position:absolute;left:802px;top:774px;width:144px;height:37px;border-left:1px solid #dfe3e6;text-align:center;font-size:14px;line-height:37px;padding-top:0;color:#000;white-space:nowrap">最低水位出现时间</div><div style="position:absolute;left:946px;top:774px;width:1px;height:37px;background:#dfe3e6"></div><div style="position:absolute;left:126px;top:811px;width:99px;height:35px;border-left:1px solid #ddd;border-bottom:1px solid #ddd;text-align:left;padding-left:.5px;line-height:35px;font-size:14px;white-space:nowrap;overflow:hidden;color:#3f6bdd">牛腰泾提升…</div><div style="position:absolute;left:225px;top:811px;width:141px;height:35px;border-left:1px solid #ddd;border-bottom:1px solid #ddd;text-align:center;line-height:35px;font-size:14px;white-space:nowrap;overflow:hidden;color:#000">关闸关泵</div><div style="position:absolute;left:366px;top:811px;width:70px;height:35px;border-left:1px solid #ddd;border-bottom:1px solid #ddd;text-align:center;line-height:35px;font-size:14px;white-space:nowrap;overflow:hidden;color:#000">-</div><div style="position:absolute;left:436px;top:811px;width:70px;height:35px;border-left:1px solid #ddd;border-bottom:1px solid #ddd;text-align:center;line-height:35px;font-size:14px;white-space:nowrap;overflow:hidden;color:#000">-</div><div style="position:absolute;left:506px;top:811px;width:71px;height:35px;border-left:1px solid #ddd;border-bottom:1px solid #ddd;text-align:center;line-height:35px;font-size:14px;white-space:nowrap;overflow:hidden;color:#000">3.01</div><div style="position:absolute;left:577px;top:811px;width:141px;height:35px;border-left:1px solid #ddd;border-bottom:1px solid #ddd;text-align:center;line-height:35px;font-size:14px;white-space:nowrap;overflow:hidden;color:#000">03-28 10:00</div><div style="position:absolute;left:718px;top:811px;width:70px;height:35px;border-left:1px solid #ddd;border-bottom:1px solid #ddd;text-align:center;line-height:35px;font-size:14px;white-space:nowrap;overflow:hidden;color:#000">2.8</div><div style="position:absolute;left:788px;top:811px;width:141px;height:35px;border-left:1px solid #ddd;border-bottom:1px solid #ddd;text-align:center;line-height:35px;font-size:14px;white-space:nowrap;overflow:hidden;color:#000">03-27 18:00</div><div style="position:absolute;left:126px;top:846px;width:99px;height:35px;border-left:1px solid #ddd;border-bottom:1px solid #ddd;text-align:left;padding-left:.5px;line-height:35px;font-size:14px;white-space:nowrap;overflow:hidden;color:#3f6bdd">内苏州河提…</div><div style="position:absolute;left:225px;top:846px;width:141px;height:35px;border-left:1px solid #ddd;border-bottom:1px solid #ddd;text-align:center;line-height:35px;font-size:14px;white-space:nowrap;overflow:hidden;color:#000">关闸关泵</div><div style="position:absolute;left:366px;top:846px;width:70px;height:35px;border-left:1px solid #ddd;border-bottom:1px solid #ddd;text-align:center;line-height:35px;font-size:14px;white-space:nowrap;overflow:hidden;color:#000">-</div><div style="position:absolute;left:436px;top:846px;width:70px;height:35px;border-left:1px solid #ddd;border-bottom:1px solid #ddd;text-align:center;line-height:35px;font-size:14px;white-space:nowrap;overflow:hidden;color:#000">-</div><div style="position:absolute;left:506px;top:846px;width:71px;height:35px;border-left:1px solid #ddd;border-bottom:1px solid #ddd;text-align:center;line-height:35px;font-size:14px;white-space:nowrap;overflow:hidden;color:#000">2.95</div><div style="position:absolute;left:577px;top:846px;width:141px;height:35px;border-left:1px solid #ddd;border-bottom:1px solid #ddd;text-align:center;line-height:35px;font-size:14px;white-space:nowrap;overflow:hidden;color:#000">03-27 15:00</div><div style="position:absolute;left:718px;top:846px;width:70px;height:35px;border-left:1px solid #ddd;border-bottom:1px solid #ddd;text-align:center;line-height:35px;font-size:14px;white-space:nowrap;overflow:hidden;color:#000">2.79</div><div style="position:absolute;left:788px;top:846px;width:141px;height:35px;border-left:1px solid #ddd;border-bottom:1px solid #ddd;text-align:center;line-height:35px;font-size:14px;white-space:nowrap;overflow:hidden;color:#000">03-27 17:00</div><div style="position:absolute;left:126px;top:881px;width:99px;height:35px;border-left:1px solid #ddd;border-bottom:1px solid #ddd;text-align:center;line-height:35px;font-size:14px;white-space:nowrap;overflow:hidden;color:#3f6bdd">西塘港闸泵</div><div style="position:absolute;left:225px;top:881px;width:141px;height:35px;border-left:1px solid #ddd;border-bottom:1px solid #ddd;text-align:center;line-height:35px;font-size:14px;white-space:nowrap;overflow:hidden;color:#000">关闸关泵</div><div style="position:absolute;left:366px;top:881px;width:70px;height:35px;border-left:1px solid #ddd;border-bottom:1px solid #ddd;text-align:center;line-height:35px;font-size:14px;white-space:nowrap;overflow:hidden;color:#000">-</div><div style="position:absolute;left:436px;top:881px;width:70px;height:35px;border-left:1px solid #ddd;border-bottom:1px solid #ddd;text-align:center;line-height:35px;font-size:14px;white-space:nowrap;overflow:hidden;color:#000">-</div><div style="position:absolute;left:506px;top:881px;width:71px;height:35px;border-left:1px solid #ddd;border-bottom:1px solid #ddd;text-align:center;line-height:35px;font-size:14px;white-space:nowrap;overflow:hidden;color:#000"></div><div style="position:absolute;left:577px;top:881px;width:141px;height:35px;border-left:1px solid #ddd;border-bottom:1px solid #ddd;text-align:center;line-height:35px;font-size:14px;white-space:nowrap;overflow:hidden;color:#000"></div><div style="position:absolute;left:718px;top:881px;width:70px;height:35px;border-left:1px solid #ddd;border-bottom:1px solid #ddd;text-align:center;line-height:35px;font-size:14px;white-space:nowrap;overflow:hidden;color:#000"></div><div style="position:absolute;left:788px;top:881px;width:141px;height:35px;border-left:1px solid #ddd;border-bottom:1px solid #ddd;text-align:center;line-height:35px;font-size:14px;white-space:nowrap;overflow:hidden;color:#000"></div><div style="position:absolute;left:126px;top:916px;width:99px;height:35px;border-left:1px solid #ddd;border-bottom:1px solid #ddd;text-align:center;line-height:35px;font-size:14px;white-space:nowrap;overflow:hidden;color:#3f6bdd">吴家港闸</div><div style="position:absolute;left:225px;top:916px;width:141px;height:35px;border-left:1px solid #ddd;border-bottom:1px solid #ddd;text-align:center;line-height:35px;font-size:14px;white-space:nowrap;overflow:hidden;color:#000">关闸关泵</div><div style="position:absolute;left:366px;top:916px;width:70px;height:35px;border-left:1px solid #ddd;border-bottom:1px solid #ddd;text-align:center;line-height:35px;font-size:14px;white-space:nowrap;overflow:hidden;color:#000">-</div><div style="position:absolute;left:436px;top:916px;width:70px;height:35px;border-left:1px solid #ddd;border-bottom:1px solid #ddd;text-align:center;line-height:35px;font-size:14px;white-space:nowrap;overflow:hidden;color:#000">-</div><div style="position:absolute;left:506px;top:916px;width:71px;height:35px;border-left:1px solid #ddd;border-bottom:1px solid #ddd;text-align:center;line-height:35px;font-size:14px;white-space:nowrap;overflow:hidden;color:#000">2.98</div><div style="position:absolute;left:577px;top:916px;width:141px;height:35px;border-left:1px solid #ddd;border-bottom:1px solid #ddd;text-align:center;line-height:35px;font-size:14px;white-space:nowrap;overflow:hidden;color:#000">03-28 10:00</div><div style="position:absolute;left:718px;top:916px;width:70px;height:35px;border-left:1px solid #ddd;border-bottom:1px solid #ddd;text-align:center;line-height:35px;font-size:14px;white-space:nowrap;overflow:hidden;color:#000">2.79</div><div style="position:absolute;left:788px;top:916px;width:141px;height:35px;border-left:1px solid #ddd;border-bottom:1px solid #ddd;text-align:center;line-height:35px;font-size:14px;white-space:nowrap;overflow:hidden;color:#000">03-27 17:00</div><div style="position:absolute;left:126px;top:951px;width:99px;height:35px;border-left:1px solid #ddd;border-bottom:1px solid #ddd;text-align:center;line-height:35px;font-size:14px;white-space:nowrap;overflow:hidden;color:#3f6bdd">行船路闸</div><div style="position:absolute;left:225px;top:951px;width:141px;height:35px;border-left:1px solid #ddd;border-bottom:1px solid #ddd;text-align:center;line-height:35px;font-size:14px;white-space:nowrap;overflow:hidden;color:#000">关闸</div><div style="position:absolute;left:366px;top:951px;width:70px;height:35px;border-left:1px solid #ddd;border-bottom:1px solid #ddd;text-align:center;line-height:35px;font-size:14px;white-space:nowrap;overflow:hidden;color:#000">-</div><div style="position:absolute;left:436px;top:951px;width:70px;height:35px;border-left:1px solid #ddd;border-bottom:1px solid #ddd;text-align:center;line-height:35px;font-size:14px;white-space:nowrap;overflow:hidden;color:#000">-</div><div style="position:absolute;left:506px;top:951px;width:71px;height:35px;border-left:1px solid #ddd;border-bottom:1px solid #ddd;text-align:center;line-height:35px;font-size:14px;white-space:nowrap;overflow:hidden;color:#000">2.98</div><div style="position:absolute;left:577px;top:951px;width:141px;height:35px;border-left:1px solid #ddd;border-bottom:1px solid #ddd;text-align:center;line-height:35px;font-size:14px;white-space:nowrap;overflow:hidden;color:#000">03-28 11:00</div><div style="position:absolute;left:718px;top:951px;width:70px;height:35px;border-left:1px solid #ddd;border-bottom:1px solid #ddd;text-align:center;line-height:35px;font-size:14px;white-space:nowrap;overflow:hidden;color:#000">2.79</div><div style="position:absolute;left:788px;top:951px;width:141px;height:35px;border-left:1px solid #ddd;border-bottom:1px solid #ddd;text-align:center;line-height:35px;font-size:14px;white-space:nowrap;overflow:hidden;color:#000">03-27 17:00</div><div style="position:absolute;left:29px;top:811px;width:97px;height:105px;border-bottom:1px solid #ddd;text-align:center;line-height:105px;font-size:14px">太湖进水</div><div style="position:absolute;left:29px;top:916px;width:97px;height:105px;text-align:center;line-height:105px;font-size:14px;white-space:nowrap">安惠港进水口</div><div style="position:absolute;left:929px;top:811px;width:18px;height:200px;background:#f1f1f1;border-left:1px solid #ddd"></div><svg style="position:absolute;left:930px;top:811px" width="17" height="17" viewBox="0 0 17 17"><path d="M5.200 11.300l3.200-3.300 3.200 3.300" fill="none" stroke="#505050" stroke-width="2.200"/></svg><div style="position:absolute;left:931px;top:828px;width:15px;height:200px;background:#cdcdcd"></div>
<svg class="ch" style="left:956px;top:774px" width="918" height="200" viewBox="956 876 918 200" font-family='"Liberation Sans", sans-serif'>
<circle cx="1415" cy="1026" r="86.300" fill="none" stroke="#e87c25" stroke-width="22"/>
<rect x="1245.500" y="885.500" width="150" height="56" rx="4" fill="#eee" stroke="#c3c3c3" stroke-width="1.400"/>
<path d="M1246 908H1395" stroke="#c8c8c8" stroke-width="1.400"/>
<text x="1320.500" y="901" text-anchor="middle" font-size="12" fill="#999">水量</text>
<text x="1252" y="930" font-size="16" fill="#b5c334">引水量：</text>
<text x="1316" y="928.500" font-size="12" fill="#b5c334">0.0万方</text>
<rect x="1363" y="917" width="26" height="15" rx="2" fill="#2f4050"/>
<text x="1376" y="929" text-anchor="middle" font-size="12" fill="#fff">0%</text>
<text x="1839" y="891.500" text-anchor="end" font-size="12" fill="#333">排水量</text>
<rect x="1844" y="881" width="25" height="14" rx="3.500" fill="#e87c25"/>
<text x="1839" y="915.500" text-anchor="end" font-size="12" fill="#333">引水量</text>
<rect x="1844" y="905" width="25" height="14" rx="3.500" fill="#b5c334"/>
</svg>
<div style="position:absolute;left:1903px;top:0;width:17px;height:974px;background:#f0f0f0;border-left:1px solid #fafafa"></div>
<svg style="position:absolute;left:1903px;top:0" width="17" height="17" viewBox="0 0 17 17"><path d="M4.800 11.400l3.700-3.800 3.700 3.800" fill="none" stroke="#505050" stroke-width="2.300"/></svg>
<svg style="position:absolute;left:1903px;top:957px" width="17" height="17" viewBox="0 0 17 17"><path d="M4.800 11.500l3.700 3.800 3.700-3.800" fill="none" stroke="#505050" stroke-width="2.300"/></svg>
<div style="position:absolute;left:1904px;top:345px;width:15px;height:341px;background:#cdcdcd"></div>
</div>
</body></html>
